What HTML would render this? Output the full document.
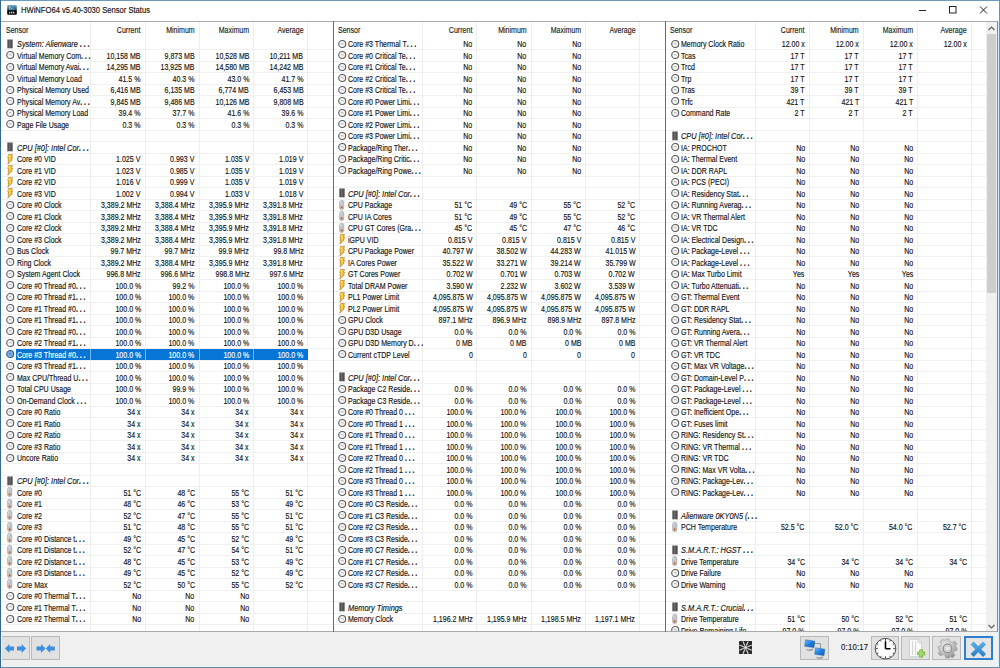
<!DOCTYPE html><html><head><meta charset="utf-8"><style>
*{margin:0;padding:0;box-sizing:border-box}
html,body{width:1000px;height:668px;overflow:hidden;background:#f0f0f0;font-family:"Liberation Sans",sans-serif}
.bd{position:absolute;background:#33698f}
#title{position:absolute;left:1px;top:1px;width:998px;height:20px;background:#fff}
#ttxt{position:absolute;left:21px;top:5px;font-size:8.3px;color:#111;white-space:nowrap;line-height:11px;transform:scaleX(0.917);transform-origin:0 50%;-webkit-text-stroke:0.15px #111}
.panel{position:absolute;top:21px;height:611px;background:#fff;overflow:hidden;border-top:1px solid #a9a9a9;border-bottom:1px solid #a9a9a9}
.vl{position:absolute;top:0;width:1px;height:611px;background:#eeeeee}
.hl{position:absolute;left:0;right:0;height:1px;background:#f0f0f0}
.hd{position:absolute;top:0.4px;height:16px;line-height:16px;font-size:8.8px;color:#1a1a1a;white-space:nowrap;transform:scaleX(0.80);-webkit-text-stroke:0.15px #1a1a1a;transform-origin:0 50%}
.hd.r{transform-origin:100% 50%}
.lb,.v{position:absolute;height:11.5px;line-height:11.5px;font-size:8.8px;color:#111;white-space:nowrap;transform:scaleX(0.80);-webkit-text-stroke:0.15px #111}
.lb{transform-origin:0 50%}.v{transform-origin:100% 50%}
.lb{left:14.2px}
.lb.g{font-style:italic;transform:scaleX(0.84)}
.el{letter-spacing:2.2px;font-weight:bold}
.s{color:#fff;-webkit-text-stroke:0.15px #fff}
.selbg{position:absolute;height:10.5px;background:#0675d6}
.selsep{position:absolute;width:1px;height:10.5px;background:#76b8f0}
.icw{position:absolute;left:3.6px;height:11.5px;width:11px}
.ic{position:absolute;left:0;top:0;overflow:visible}
.div{position:absolute;top:21px;width:1px;height:611px;background:#6a6a6a}
.sb{position:absolute;right:0;top:0;width:11px;height:610px;background:#f0f0f0}
.sbup{position:absolute;top:0;left:0;width:11px;height:12px}
.sbdn{position:absolute;bottom:0;left:0;width:11px;height:12px}
.sbup svg,.sbdn svg{position:absolute;left:0;top:0.5px}
.thumb{position:absolute;left:1px;top:11.5px;width:9px;height:259.5px;background:#cdcdcd}
.btn{position:absolute;top:636px;height:24px;width:29px;background:#e1e1e1;border:1px solid #b9b9b9}
</style></head><body>
<div id="title"></div>
<svg style="position:absolute;left:6.5px;top:5px" width="10" height="10" viewBox="0 0 10 10"><defs><linearGradient id="tg" x1="0" y1="0" x2="0" y2="1"><stop offset="0" stop-color="#78aacb"/><stop offset="0.5" stop-color="#154663"/><stop offset="0.6" stop-color="#000"/><stop offset="1" stop-color="#000"/></linearGradient></defs><rect x="0.2" y="0.1" width="9.6" height="9.7" rx="1" fill="url(#tg)"/><path d="M2.8 1.4v3.3M4.8 2.6v2.1M6.8 3.8v0.9" stroke="#bff0ff" stroke-width="0.9"/><ellipse cx="2.8" cy="7.6" rx="0.6" ry="1.1" fill="#fff"/><ellipse cx="4.8" cy="7.6" rx="0.6" ry="1.1" fill="#fff"/><ellipse cx="6.8" cy="7.6" rx="0.6" ry="1.1" fill="#fff"/></svg>
<div id="ttxt">HWiNFO64 v5.40-3030 Sensor Status</div>
<svg style="position:absolute;left:915px;top:4px" width="80" height="14" viewBox="0 0 80 14"><path d="M4 6.5h7" stroke="#222" stroke-width="1"/><rect x="34.5" y="2.5" width="6.5" height="6.5" fill="none" stroke="#222" stroke-width="1"/><path d="M65 2.5l7 7M72 2.5l-7 7" stroke="#222" stroke-width="1"/></svg>
<div class="panel" style="left:1px;width:332px">
<div class="vl" style="left:89.00px"></div>
<div class="vl" style="left:143.80px"></div>
<div class="vl" style="left:197.70px"></div>
<div class="vl" style="left:252.10px"></div>
<div class="vl" style="left:306.20px"></div>
<div class="hl" style="top:27.25px"></div>
<div class="hl" style="top:38.75px"></div>
<div class="hl" style="top:50.25px"></div>
<div class="hl" style="top:61.75px"></div>
<div class="hl" style="top:73.25px"></div>
<div class="hl" style="top:84.75px"></div>
<div class="hl" style="top:96.25px"></div>
<div class="hl" style="top:107.75px"></div>
<div class="hl" style="top:119.25px"></div>
<div class="hl" style="top:130.75px"></div>
<div class="hl" style="top:142.25px"></div>
<div class="hl" style="top:153.75px"></div>
<div class="hl" style="top:165.25px"></div>
<div class="hl" style="top:176.75px"></div>
<div class="hl" style="top:188.25px"></div>
<div class="hl" style="top:199.75px"></div>
<div class="hl" style="top:211.25px"></div>
<div class="hl" style="top:222.75px"></div>
<div class="hl" style="top:234.25px"></div>
<div class="hl" style="top:245.75px"></div>
<div class="hl" style="top:257.25px"></div>
<div class="hl" style="top:268.75px"></div>
<div class="hl" style="top:280.25px"></div>
<div class="hl" style="top:291.75px"></div>
<div class="hl" style="top:303.25px"></div>
<div class="hl" style="top:314.75px"></div>
<div class="hl" style="top:326.25px"></div>
<div class="hl" style="top:337.75px"></div>
<div class="hl" style="top:349.25px"></div>
<div class="hl" style="top:360.75px"></div>
<div class="hl" style="top:372.25px"></div>
<div class="hl" style="top:383.75px"></div>
<div class="hl" style="top:395.25px"></div>
<div class="hl" style="top:406.75px"></div>
<div class="hl" style="top:418.25px"></div>
<div class="hl" style="top:429.75px"></div>
<div class="hl" style="top:441.25px"></div>
<div class="hl" style="top:452.75px"></div>
<div class="hl" style="top:464.25px"></div>
<div class="hl" style="top:475.75px"></div>
<div class="hl" style="top:487.25px"></div>
<div class="hl" style="top:498.75px"></div>
<div class="hl" style="top:510.25px"></div>
<div class="hl" style="top:521.75px"></div>
<div class="hl" style="top:533.25px"></div>
<div class="hl" style="top:544.75px"></div>
<div class="hl" style="top:556.25px"></div>
<div class="hl" style="top:567.75px"></div>
<div class="hl" style="top:579.25px"></div>
<div class="hl" style="top:590.75px"></div>
<div class="hl" style="top:602.25px"></div>
<div class="hl" style="top:613.75px"></div>
<div class="hd" style="left:4.6px">Sensor</div>
<div class="hd r" style="right:192.20px">Current</div>
<div class="hd r" style="right:138.30px">Minimum</div>
<div class="hd r" style="right:83.90px">Maximum</div>
<div class="hd r" style="right:29.80px">Average</div>
<div class="icw" style="top:16.65px;left:5.4px"><svg class="ic" width="10" height="11" viewBox="0 0 10 11"><defs><linearGradient id="chg" x1="0" y1="0" x2="1" y2="0"><stop offset="0" stop-color="#3a3a3a"/><stop offset="0.45" stop-color="#6e6e6e"/><stop offset="1" stop-color="#383838"/></linearGradient></defs><rect x="1.4" y="0.5" width="5.2" height="8.8" fill="url(#chg)"/><path d="M0.9 1.8h0.6M0.9 3.8h0.6M0.9 5.8h0.6M0.9 7.8h0.6M6.5 1.8h0.6M6.5 3.8h0.6M6.5 5.8h0.6M6.5 7.8h0.6" stroke="#999" stroke-width="0.7"/></svg></div>
<div class="lb g" style="top:17.05px;left:16.0px">System: Alienware <span class=el>...</span></div>
<div class="icw" style="top:28.15px;left:5.4px"><svg class="ic" width="10" height="11" viewBox="0 0 10 11"><circle cx="4.2" cy="5.0" r="3.5" fill="#f4f4f4" stroke="#5a5a5a" stroke-width="1.1"/><path d="M2.9 4.7 Q4.3 4.2 5.7 5.3" fill="none" stroke="#9a9a9a" stroke-width="0.8"/></svg></div>
<div class="lb" style="top:28.55px;left:16.0px">Virtual Memory Com<span class=el>...</span></div>
<div class="v" style="top:28.55px;right:192.20px">10,158 MB</div>
<div class="v" style="top:28.55px;right:138.30px">9,873 MB</div>
<div class="v" style="top:28.55px;right:83.90px">10,528 MB</div>
<div class="v" style="top:28.55px;right:29.80px">10,211 MB</div>
<div class="icw" style="top:39.65px;left:5.4px"><svg class="ic" width="10" height="11" viewBox="0 0 10 11"><circle cx="4.2" cy="5.0" r="3.5" fill="#f4f4f4" stroke="#5a5a5a" stroke-width="1.1"/><path d="M2.9 4.7 Q4.3 4.2 5.7 5.3" fill="none" stroke="#9a9a9a" stroke-width="0.8"/></svg></div>
<div class="lb" style="top:40.05px;left:16.0px">Virtual Memory Avai<span class=el>...</span></div>
<div class="v" style="top:40.05px;right:192.20px">14,295 MB</div>
<div class="v" style="top:40.05px;right:138.30px">13,925 MB</div>
<div class="v" style="top:40.05px;right:83.90px">14,580 MB</div>
<div class="v" style="top:40.05px;right:29.80px">14,242 MB</div>
<div class="icw" style="top:51.15px;left:5.4px"><svg class="ic" width="10" height="11" viewBox="0 0 10 11"><circle cx="4.2" cy="5.0" r="3.5" fill="#f4f4f4" stroke="#5a5a5a" stroke-width="1.1"/><path d="M2.9 4.7 Q4.3 4.2 5.7 5.3" fill="none" stroke="#9a9a9a" stroke-width="0.8"/></svg></div>
<div class="lb" style="top:51.55px;left:16.0px">Virtual Memory Load</div>
<div class="v" style="top:51.55px;right:192.20px">41.5 %</div>
<div class="v" style="top:51.55px;right:138.30px">40.3 %</div>
<div class="v" style="top:51.55px;right:83.90px">43.0 %</div>
<div class="v" style="top:51.55px;right:29.80px">41.7 %</div>
<div class="icw" style="top:62.65px;left:5.4px"><svg class="ic" width="10" height="11" viewBox="0 0 10 11"><circle cx="4.2" cy="5.0" r="3.5" fill="#f4f4f4" stroke="#5a5a5a" stroke-width="1.1"/><path d="M2.9 4.7 Q4.3 4.2 5.7 5.3" fill="none" stroke="#9a9a9a" stroke-width="0.8"/></svg></div>
<div class="lb" style="top:63.05px;left:16.0px">Physical Memory Used</div>
<div class="v" style="top:63.05px;right:192.20px">6,416 MB</div>
<div class="v" style="top:63.05px;right:138.30px">6,135 MB</div>
<div class="v" style="top:63.05px;right:83.90px">6,774 MB</div>
<div class="v" style="top:63.05px;right:29.80px">6,453 MB</div>
<div class="icw" style="top:74.15px;left:5.4px"><svg class="ic" width="10" height="11" viewBox="0 0 10 11"><circle cx="4.2" cy="5.0" r="3.5" fill="#f4f4f4" stroke="#5a5a5a" stroke-width="1.1"/><path d="M2.9 4.7 Q4.3 4.2 5.7 5.3" fill="none" stroke="#9a9a9a" stroke-width="0.8"/></svg></div>
<div class="lb" style="top:74.55px;left:16.0px">Physical Memory Av<span class=el>...</span></div>
<div class="v" style="top:74.55px;right:192.20px">9,845 MB</div>
<div class="v" style="top:74.55px;right:138.30px">9,486 MB</div>
<div class="v" style="top:74.55px;right:83.90px">10,126 MB</div>
<div class="v" style="top:74.55px;right:29.80px">9,808 MB</div>
<div class="icw" style="top:85.65px;left:5.4px"><svg class="ic" width="10" height="11" viewBox="0 0 10 11"><circle cx="4.2" cy="5.0" r="3.5" fill="#f4f4f4" stroke="#5a5a5a" stroke-width="1.1"/><path d="M2.9 4.7 Q4.3 4.2 5.7 5.3" fill="none" stroke="#9a9a9a" stroke-width="0.8"/></svg></div>
<div class="lb" style="top:86.05px;left:16.0px">Physical Memory Load</div>
<div class="v" style="top:86.05px;right:192.20px">39.4 %</div>
<div class="v" style="top:86.05px;right:138.30px">37.7 %</div>
<div class="v" style="top:86.05px;right:83.90px">41.6 %</div>
<div class="v" style="top:86.05px;right:29.80px">39.6 %</div>
<div class="icw" style="top:97.15px;left:5.4px"><svg class="ic" width="10" height="11" viewBox="0 0 10 11"><circle cx="4.2" cy="5.0" r="3.5" fill="#f4f4f4" stroke="#5a5a5a" stroke-width="1.1"/><path d="M2.9 4.7 Q4.3 4.2 5.7 5.3" fill="none" stroke="#9a9a9a" stroke-width="0.8"/></svg></div>
<div class="lb" style="top:97.55px;left:16.0px">Page File Usage</div>
<div class="v" style="top:97.55px;right:192.20px">0.3 %</div>
<div class="v" style="top:97.55px;right:138.30px">0.3 %</div>
<div class="v" style="top:97.55px;right:83.90px">0.3 %</div>
<div class="v" style="top:97.55px;right:29.80px">0.3 %</div>
<div class="icw" style="top:120.15px;left:5.4px"><svg class="ic" width="10" height="11" viewBox="0 0 10 11"><defs><linearGradient id="chg" x1="0" y1="0" x2="1" y2="0"><stop offset="0" stop-color="#3a3a3a"/><stop offset="0.45" stop-color="#6e6e6e"/><stop offset="1" stop-color="#383838"/></linearGradient></defs><rect x="1.4" y="0.5" width="5.2" height="8.8" fill="url(#chg)"/><path d="M0.9 1.8h0.6M0.9 3.8h0.6M0.9 5.8h0.6M0.9 7.8h0.6M6.5 1.8h0.6M6.5 3.8h0.6M6.5 5.8h0.6M6.5 7.8h0.6" stroke="#999" stroke-width="0.7"/></svg></div>
<div class="lb g" style="top:120.55px;left:16.0px">CPU [#0]: Intel Cor<span class=el>...</span></div>
<div class="icw" style="top:131.65px;left:5.4px"><svg class="ic" width="10" height="11" viewBox="0 0 10 11"><path d="M2.4 0.6 L6.5 0.6 L5.3 3.3 L6.7 3.3 L5.4 5.9 L6.3 5.9 L1.8 10.1 L2.9 6.4 L1.9 6.4 L2.8 3.9 L1.8 3.9 Z" fill="#f3d13a" stroke="#b46a1c" stroke-width="0.6" stroke-linejoin="round"/><path d="M3.3 1.2 L2.6 3.4" stroke="#fff6b0" stroke-width="0.6"/></svg></div>
<div class="lb" style="top:132.05px;left:16.0px">Core #0 VID</div>
<div class="v" style="top:132.05px;right:192.20px">1.025 V</div>
<div class="v" style="top:132.05px;right:138.30px">0.993 V</div>
<div class="v" style="top:132.05px;right:83.90px">1.035 V</div>
<div class="v" style="top:132.05px;right:29.80px">1.019 V</div>
<div class="icw" style="top:143.15px;left:5.4px"><svg class="ic" width="10" height="11" viewBox="0 0 10 11"><path d="M2.4 0.6 L6.5 0.6 L5.3 3.3 L6.7 3.3 L5.4 5.9 L6.3 5.9 L1.8 10.1 L2.9 6.4 L1.9 6.4 L2.8 3.9 L1.8 3.9 Z" fill="#f3d13a" stroke="#b46a1c" stroke-width="0.6" stroke-linejoin="round"/><path d="M3.3 1.2 L2.6 3.4" stroke="#fff6b0" stroke-width="0.6"/></svg></div>
<div class="lb" style="top:143.55px;left:16.0px">Core #1 VID</div>
<div class="v" style="top:143.55px;right:192.20px">1.023 V</div>
<div class="v" style="top:143.55px;right:138.30px">0.985 V</div>
<div class="v" style="top:143.55px;right:83.90px">1.035 V</div>
<div class="v" style="top:143.55px;right:29.80px">1.019 V</div>
<div class="icw" style="top:154.65px;left:5.4px"><svg class="ic" width="10" height="11" viewBox="0 0 10 11"><path d="M2.4 0.6 L6.5 0.6 L5.3 3.3 L6.7 3.3 L5.4 5.9 L6.3 5.9 L1.8 10.1 L2.9 6.4 L1.9 6.4 L2.8 3.9 L1.8 3.9 Z" fill="#f3d13a" stroke="#b46a1c" stroke-width="0.6" stroke-linejoin="round"/><path d="M3.3 1.2 L2.6 3.4" stroke="#fff6b0" stroke-width="0.6"/></svg></div>
<div class="lb" style="top:155.05px;left:16.0px">Core #2 VID</div>
<div class="v" style="top:155.05px;right:192.20px">1.016 V</div>
<div class="v" style="top:155.05px;right:138.30px">0.999 V</div>
<div class="v" style="top:155.05px;right:83.90px">1.035 V</div>
<div class="v" style="top:155.05px;right:29.80px">1.019 V</div>
<div class="icw" style="top:166.15px;left:5.4px"><svg class="ic" width="10" height="11" viewBox="0 0 10 11"><path d="M2.4 0.6 L6.5 0.6 L5.3 3.3 L6.7 3.3 L5.4 5.9 L6.3 5.9 L1.8 10.1 L2.9 6.4 L1.9 6.4 L2.8 3.9 L1.8 3.9 Z" fill="#f3d13a" stroke="#b46a1c" stroke-width="0.6" stroke-linejoin="round"/><path d="M3.3 1.2 L2.6 3.4" stroke="#fff6b0" stroke-width="0.6"/></svg></div>
<div class="lb" style="top:166.55px;left:16.0px">Core #3 VID</div>
<div class="v" style="top:166.55px;right:192.20px">1.002 V</div>
<div class="v" style="top:166.55px;right:138.30px">0.994 V</div>
<div class="v" style="top:166.55px;right:83.90px">1.033 V</div>
<div class="v" style="top:166.55px;right:29.80px">1.018 V</div>
<div class="icw" style="top:177.65px;left:5.4px"><svg class="ic" width="10" height="11" viewBox="0 0 10 11"><circle cx="4.2" cy="5.0" r="3.5" fill="#f4f4f4" stroke="#5a5a5a" stroke-width="1.1"/><path d="M2.9 4.7 Q4.3 4.2 5.7 5.3" fill="none" stroke="#9a9a9a" stroke-width="0.8"/></svg></div>
<div class="lb" style="top:178.05px;left:16.0px">Core #0 Clock</div>
<div class="v" style="top:178.05px;right:192.20px">3,389.2 MHz</div>
<div class="v" style="top:178.05px;right:138.30px">3,388.4 MHz</div>
<div class="v" style="top:178.05px;right:83.90px">3,395.9 MHz</div>
<div class="v" style="top:178.05px;right:29.80px">3,391.8 MHz</div>
<div class="icw" style="top:189.15px;left:5.4px"><svg class="ic" width="10" height="11" viewBox="0 0 10 11"><circle cx="4.2" cy="5.0" r="3.5" fill="#f4f4f4" stroke="#5a5a5a" stroke-width="1.1"/><path d="M2.9 4.7 Q4.3 4.2 5.7 5.3" fill="none" stroke="#9a9a9a" stroke-width="0.8"/></svg></div>
<div class="lb" style="top:189.55px;left:16.0px">Core #1 Clock</div>
<div class="v" style="top:189.55px;right:192.20px">3,389.2 MHz</div>
<div class="v" style="top:189.55px;right:138.30px">3,388.4 MHz</div>
<div class="v" style="top:189.55px;right:83.90px">3,395.9 MHz</div>
<div class="v" style="top:189.55px;right:29.80px">3,391.8 MHz</div>
<div class="icw" style="top:200.65px;left:5.4px"><svg class="ic" width="10" height="11" viewBox="0 0 10 11"><circle cx="4.2" cy="5.0" r="3.5" fill="#f4f4f4" stroke="#5a5a5a" stroke-width="1.1"/><path d="M2.9 4.7 Q4.3 4.2 5.7 5.3" fill="none" stroke="#9a9a9a" stroke-width="0.8"/></svg></div>
<div class="lb" style="top:201.05px;left:16.0px">Core #2 Clock</div>
<div class="v" style="top:201.05px;right:192.20px">3,389.2 MHz</div>
<div class="v" style="top:201.05px;right:138.30px">3,388.4 MHz</div>
<div class="v" style="top:201.05px;right:83.90px">3,395.9 MHz</div>
<div class="v" style="top:201.05px;right:29.80px">3,391.8 MHz</div>
<div class="icw" style="top:212.15px;left:5.4px"><svg class="ic" width="10" height="11" viewBox="0 0 10 11"><circle cx="4.2" cy="5.0" r="3.5" fill="#f4f4f4" stroke="#5a5a5a" stroke-width="1.1"/><path d="M2.9 4.7 Q4.3 4.2 5.7 5.3" fill="none" stroke="#9a9a9a" stroke-width="0.8"/></svg></div>
<div class="lb" style="top:212.55px;left:16.0px">Core #3 Clock</div>
<div class="v" style="top:212.55px;right:192.20px">3,389.2 MHz</div>
<div class="v" style="top:212.55px;right:138.30px">3,388.4 MHz</div>
<div class="v" style="top:212.55px;right:83.90px">3,395.9 MHz</div>
<div class="v" style="top:212.55px;right:29.80px">3,391.8 MHz</div>
<div class="icw" style="top:223.65px;left:5.4px"><svg class="ic" width="10" height="11" viewBox="0 0 10 11"><circle cx="4.2" cy="5.0" r="3.5" fill="#f4f4f4" stroke="#5a5a5a" stroke-width="1.1"/><path d="M2.9 4.7 Q4.3 4.2 5.7 5.3" fill="none" stroke="#9a9a9a" stroke-width="0.8"/></svg></div>
<div class="lb" style="top:224.05px;left:16.0px">Bus Clock</div>
<div class="v" style="top:224.05px;right:192.20px">99.7 MHz</div>
<div class="v" style="top:224.05px;right:138.30px">99.7 MHz</div>
<div class="v" style="top:224.05px;right:83.90px">99.9 MHz</div>
<div class="v" style="top:224.05px;right:29.80px">99.8 MHz</div>
<div class="icw" style="top:235.15px;left:5.4px"><svg class="ic" width="10" height="11" viewBox="0 0 10 11"><circle cx="4.2" cy="5.0" r="3.5" fill="#f4f4f4" stroke="#5a5a5a" stroke-width="1.1"/><path d="M2.9 4.7 Q4.3 4.2 5.7 5.3" fill="none" stroke="#9a9a9a" stroke-width="0.8"/></svg></div>
<div class="lb" style="top:235.55px;left:16.0px">Ring Clock</div>
<div class="v" style="top:235.55px;right:192.20px">3,389.2 MHz</div>
<div class="v" style="top:235.55px;right:138.30px">3,388.4 MHz</div>
<div class="v" style="top:235.55px;right:83.90px">3,395.9 MHz</div>
<div class="v" style="top:235.55px;right:29.80px">3,391.8 MHz</div>
<div class="icw" style="top:246.65px;left:5.4px"><svg class="ic" width="10" height="11" viewBox="0 0 10 11"><circle cx="4.2" cy="5.0" r="3.5" fill="#f4f4f4" stroke="#5a5a5a" stroke-width="1.1"/><path d="M2.9 4.7 Q4.3 4.2 5.7 5.3" fill="none" stroke="#9a9a9a" stroke-width="0.8"/></svg></div>
<div class="lb" style="top:247.05px;left:16.0px">System Agent Clock</div>
<div class="v" style="top:247.05px;right:192.20px">996.8 MHz</div>
<div class="v" style="top:247.05px;right:138.30px">996.6 MHz</div>
<div class="v" style="top:247.05px;right:83.90px">998.8 MHz</div>
<div class="v" style="top:247.05px;right:29.80px">997.6 MHz</div>
<div class="icw" style="top:258.15px;left:5.4px"><svg class="ic" width="10" height="11" viewBox="0 0 10 11"><circle cx="4.2" cy="5.0" r="3.5" fill="#f4f4f4" stroke="#5a5a5a" stroke-width="1.1"/><path d="M2.9 4.7 Q4.3 4.2 5.7 5.3" fill="none" stroke="#9a9a9a" stroke-width="0.8"/></svg></div>
<div class="lb" style="top:258.55px;left:16.0px">Core #0 Thread #0<span class=el>...</span></div>
<div class="v" style="top:258.55px;right:192.20px">100.0 %</div>
<div class="v" style="top:258.55px;right:138.30px">99.2 %</div>
<div class="v" style="top:258.55px;right:83.90px">100.0 %</div>
<div class="v" style="top:258.55px;right:29.80px">100.0 %</div>
<div class="icw" style="top:269.65px;left:5.4px"><svg class="ic" width="10" height="11" viewBox="0 0 10 11"><circle cx="4.2" cy="5.0" r="3.5" fill="#f4f4f4" stroke="#5a5a5a" stroke-width="1.1"/><path d="M2.9 4.7 Q4.3 4.2 5.7 5.3" fill="none" stroke="#9a9a9a" stroke-width="0.8"/></svg></div>
<div class="lb" style="top:270.05px;left:16.0px">Core #0 Thread #1<span class=el>...</span></div>
<div class="v" style="top:270.05px;right:192.20px">100.0 %</div>
<div class="v" style="top:270.05px;right:138.30px">100.0 %</div>
<div class="v" style="top:270.05px;right:83.90px">100.0 %</div>
<div class="v" style="top:270.05px;right:29.80px">100.0 %</div>
<div class="icw" style="top:281.15px;left:5.4px"><svg class="ic" width="10" height="11" viewBox="0 0 10 11"><circle cx="4.2" cy="5.0" r="3.5" fill="#f4f4f4" stroke="#5a5a5a" stroke-width="1.1"/><path d="M2.9 4.7 Q4.3 4.2 5.7 5.3" fill="none" stroke="#9a9a9a" stroke-width="0.8"/></svg></div>
<div class="lb" style="top:281.55px;left:16.0px">Core #1 Thread #0<span class=el>...</span></div>
<div class="v" style="top:281.55px;right:192.20px">100.0 %</div>
<div class="v" style="top:281.55px;right:138.30px">100.0 %</div>
<div class="v" style="top:281.55px;right:83.90px">100.0 %</div>
<div class="v" style="top:281.55px;right:29.80px">100.0 %</div>
<div class="icw" style="top:292.65px;left:5.4px"><svg class="ic" width="10" height="11" viewBox="0 0 10 11"><circle cx="4.2" cy="5.0" r="3.5" fill="#f4f4f4" stroke="#5a5a5a" stroke-width="1.1"/><path d="M2.9 4.7 Q4.3 4.2 5.7 5.3" fill="none" stroke="#9a9a9a" stroke-width="0.8"/></svg></div>
<div class="lb" style="top:293.05px;left:16.0px">Core #1 Thread #1<span class=el>...</span></div>
<div class="v" style="top:293.05px;right:192.20px">100.0 %</div>
<div class="v" style="top:293.05px;right:138.30px">100.0 %</div>
<div class="v" style="top:293.05px;right:83.90px">100.0 %</div>
<div class="v" style="top:293.05px;right:29.80px">100.0 %</div>
<div class="icw" style="top:304.15px;left:5.4px"><svg class="ic" width="10" height="11" viewBox="0 0 10 11"><circle cx="4.2" cy="5.0" r="3.5" fill="#f4f4f4" stroke="#5a5a5a" stroke-width="1.1"/><path d="M2.9 4.7 Q4.3 4.2 5.7 5.3" fill="none" stroke="#9a9a9a" stroke-width="0.8"/></svg></div>
<div class="lb" style="top:304.55px;left:16.0px">Core #2 Thread #0<span class=el>...</span></div>
<div class="v" style="top:304.55px;right:192.20px">100.0 %</div>
<div class="v" style="top:304.55px;right:138.30px">100.0 %</div>
<div class="v" style="top:304.55px;right:83.90px">100.0 %</div>
<div class="v" style="top:304.55px;right:29.80px">100.0 %</div>
<div class="icw" style="top:315.65px;left:5.4px"><svg class="ic" width="10" height="11" viewBox="0 0 10 11"><circle cx="4.2" cy="5.0" r="3.5" fill="#f4f4f4" stroke="#5a5a5a" stroke-width="1.1"/><path d="M2.9 4.7 Q4.3 4.2 5.7 5.3" fill="none" stroke="#9a9a9a" stroke-width="0.8"/></svg></div>
<div class="lb" style="top:316.05px;left:16.0px">Core #2 Thread #1<span class=el>...</span></div>
<div class="v" style="top:316.05px;right:192.20px">100.0 %</div>
<div class="v" style="top:316.05px;right:138.30px">100.0 %</div>
<div class="v" style="top:316.05px;right:83.90px">100.0 %</div>
<div class="v" style="top:316.05px;right:29.80px">100.0 %</div>
<div class="selbg" style="top:327.00px;left:15.0px;width:292.20px"></div>
<div class="selsep" style="top:327.00px;left:89.00px"></div>
<div class="selsep" style="top:327.00px;left:143.80px"></div>
<div class="selsep" style="top:327.00px;left:197.70px"></div>
<div class="selsep" style="top:327.00px;left:252.10px"></div>
<div class="icw" style="top:327.15px;left:5.4px"><svg class="ic" width="10" height="11" viewBox="0 0 10 11"><circle cx="4.2" cy="5.0" r="3.5" fill="#7fb0e0" stroke="#2d5f99" stroke-width="1.1"/><path d="M2.9 4.7 Q4.3 4.2 5.7 5.3" fill="none" stroke="#3a6aa8" stroke-width="0.8"/></svg></div>
<div class="lb s" style="top:327.55px;left:16.0px">Core #3 Thread #0<span class=el>...</span></div>
<div class="v s" style="top:327.55px;right:192.20px">100.0 %</div>
<div class="v s" style="top:327.55px;right:138.30px">100.0 %</div>
<div class="v s" style="top:327.55px;right:83.90px">100.0 %</div>
<div class="v s" style="top:327.55px;right:29.80px">100.0 %</div>
<div class="icw" style="top:338.65px;left:5.4px"><svg class="ic" width="10" height="11" viewBox="0 0 10 11"><circle cx="4.2" cy="5.0" r="3.5" fill="#f4f4f4" stroke="#5a5a5a" stroke-width="1.1"/><path d="M2.9 4.7 Q4.3 4.2 5.7 5.3" fill="none" stroke="#9a9a9a" stroke-width="0.8"/></svg></div>
<div class="lb" style="top:339.05px;left:16.0px">Core #3 Thread #1<span class=el>...</span></div>
<div class="v" style="top:339.05px;right:192.20px">100.0 %</div>
<div class="v" style="top:339.05px;right:138.30px">100.0 %</div>
<div class="v" style="top:339.05px;right:83.90px">100.0 %</div>
<div class="v" style="top:339.05px;right:29.80px">100.0 %</div>
<div class="icw" style="top:350.15px;left:5.4px"><svg class="ic" width="10" height="11" viewBox="0 0 10 11"><circle cx="4.2" cy="5.0" r="3.5" fill="#f4f4f4" stroke="#5a5a5a" stroke-width="1.1"/><path d="M2.9 4.7 Q4.3 4.2 5.7 5.3" fill="none" stroke="#9a9a9a" stroke-width="0.8"/></svg></div>
<div class="lb" style="top:350.55px;left:16.0px">Max CPU/Thread U<span class=el>...</span></div>
<div class="v" style="top:350.55px;right:192.20px">100.0 %</div>
<div class="v" style="top:350.55px;right:138.30px">100.0 %</div>
<div class="v" style="top:350.55px;right:83.90px">100.0 %</div>
<div class="v" style="top:350.55px;right:29.80px">100.0 %</div>
<div class="icw" style="top:361.65px;left:5.4px"><svg class="ic" width="10" height="11" viewBox="0 0 10 11"><circle cx="4.2" cy="5.0" r="3.5" fill="#f4f4f4" stroke="#5a5a5a" stroke-width="1.1"/><path d="M2.9 4.7 Q4.3 4.2 5.7 5.3" fill="none" stroke="#9a9a9a" stroke-width="0.8"/></svg></div>
<div class="lb" style="top:362.05px;left:16.0px">Total CPU Usage</div>
<div class="v" style="top:362.05px;right:192.20px">100.0 %</div>
<div class="v" style="top:362.05px;right:138.30px">99.9 %</div>
<div class="v" style="top:362.05px;right:83.90px">100.0 %</div>
<div class="v" style="top:362.05px;right:29.80px">100.0 %</div>
<div class="icw" style="top:373.15px;left:5.4px"><svg class="ic" width="10" height="11" viewBox="0 0 10 11"><circle cx="4.2" cy="5.0" r="3.5" fill="#f4f4f4" stroke="#5a5a5a" stroke-width="1.1"/><path d="M2.9 4.7 Q4.3 4.2 5.7 5.3" fill="none" stroke="#9a9a9a" stroke-width="0.8"/></svg></div>
<div class="lb" style="top:373.55px;left:16.0px">On-Demand Clock <span class=el>...</span></div>
<div class="v" style="top:373.55px;right:192.20px">100.0 %</div>
<div class="v" style="top:373.55px;right:138.30px">100.0 %</div>
<div class="v" style="top:373.55px;right:83.90px">100.0 %</div>
<div class="v" style="top:373.55px;right:29.80px">100.0 %</div>
<div class="icw" style="top:384.65px;left:5.4px"><svg class="ic" width="10" height="11" viewBox="0 0 10 11"><circle cx="4.2" cy="5.0" r="3.5" fill="#f4f4f4" stroke="#5a5a5a" stroke-width="1.1"/><path d="M2.9 4.7 Q4.3 4.2 5.7 5.3" fill="none" stroke="#9a9a9a" stroke-width="0.8"/></svg></div>
<div class="lb" style="top:385.05px;left:16.0px">Core #0 Ratio</div>
<div class="v" style="top:385.05px;right:192.20px">34 x</div>
<div class="v" style="top:385.05px;right:138.30px">34 x</div>
<div class="v" style="top:385.05px;right:83.90px">34 x</div>
<div class="v" style="top:385.05px;right:29.80px">34 x</div>
<div class="icw" style="top:396.15px;left:5.4px"><svg class="ic" width="10" height="11" viewBox="0 0 10 11"><circle cx="4.2" cy="5.0" r="3.5" fill="#f4f4f4" stroke="#5a5a5a" stroke-width="1.1"/><path d="M2.9 4.7 Q4.3 4.2 5.7 5.3" fill="none" stroke="#9a9a9a" stroke-width="0.8"/></svg></div>
<div class="lb" style="top:396.55px;left:16.0px">Core #1 Ratio</div>
<div class="v" style="top:396.55px;right:192.20px">34 x</div>
<div class="v" style="top:396.55px;right:138.30px">34 x</div>
<div class="v" style="top:396.55px;right:83.90px">34 x</div>
<div class="v" style="top:396.55px;right:29.80px">34 x</div>
<div class="icw" style="top:407.65px;left:5.4px"><svg class="ic" width="10" height="11" viewBox="0 0 10 11"><circle cx="4.2" cy="5.0" r="3.5" fill="#f4f4f4" stroke="#5a5a5a" stroke-width="1.1"/><path d="M2.9 4.7 Q4.3 4.2 5.7 5.3" fill="none" stroke="#9a9a9a" stroke-width="0.8"/></svg></div>
<div class="lb" style="top:408.05px;left:16.0px">Core #2 Ratio</div>
<div class="v" style="top:408.05px;right:192.20px">34 x</div>
<div class="v" style="top:408.05px;right:138.30px">34 x</div>
<div class="v" style="top:408.05px;right:83.90px">34 x</div>
<div class="v" style="top:408.05px;right:29.80px">34 x</div>
<div class="icw" style="top:419.15px;left:5.4px"><svg class="ic" width="10" height="11" viewBox="0 0 10 11"><circle cx="4.2" cy="5.0" r="3.5" fill="#f4f4f4" stroke="#5a5a5a" stroke-width="1.1"/><path d="M2.9 4.7 Q4.3 4.2 5.7 5.3" fill="none" stroke="#9a9a9a" stroke-width="0.8"/></svg></div>
<div class="lb" style="top:419.55px;left:16.0px">Core #3 Ratio</div>
<div class="v" style="top:419.55px;right:192.20px">34 x</div>
<div class="v" style="top:419.55px;right:138.30px">34 x</div>
<div class="v" style="top:419.55px;right:83.90px">34 x</div>
<div class="v" style="top:419.55px;right:29.80px">34 x</div>
<div class="icw" style="top:430.65px;left:5.4px"><svg class="ic" width="10" height="11" viewBox="0 0 10 11"><circle cx="4.2" cy="5.0" r="3.5" fill="#f4f4f4" stroke="#5a5a5a" stroke-width="1.1"/><path d="M2.9 4.7 Q4.3 4.2 5.7 5.3" fill="none" stroke="#9a9a9a" stroke-width="0.8"/></svg></div>
<div class="lb" style="top:431.05px;left:16.0px">Uncore Ratio</div>
<div class="v" style="top:431.05px;right:192.20px">34 x</div>
<div class="v" style="top:431.05px;right:138.30px">34 x</div>
<div class="v" style="top:431.05px;right:83.90px">34 x</div>
<div class="v" style="top:431.05px;right:29.80px">34 x</div>
<div class="icw" style="top:453.65px;left:5.4px"><svg class="ic" width="10" height="11" viewBox="0 0 10 11"><defs><linearGradient id="chg" x1="0" y1="0" x2="1" y2="0"><stop offset="0" stop-color="#3a3a3a"/><stop offset="0.45" stop-color="#6e6e6e"/><stop offset="1" stop-color="#383838"/></linearGradient></defs><rect x="1.4" y="0.5" width="5.2" height="8.8" fill="url(#chg)"/><path d="M0.9 1.8h0.6M0.9 3.8h0.6M0.9 5.8h0.6M0.9 7.8h0.6M6.5 1.8h0.6M6.5 3.8h0.6M6.5 5.8h0.6M6.5 7.8h0.6" stroke="#999" stroke-width="0.7"/></svg></div>
<div class="lb g" style="top:454.05px;left:16.0px">CPU [#0]: Intel Cor<span class=el>...</span></div>
<div class="icw" style="top:465.15px;left:5.4px"><svg class="ic" width="10" height="11" viewBox="0 0 10 11"><defs><linearGradient id="thg" x1="0" y1="0" x2="0" y2="1"><stop offset="0" stop-color="#b9c3ca"/><stop offset="0.55" stop-color="#c3c3c3"/><stop offset="0.7" stop-color="#d8b4a0"/><stop offset="1" stop-color="#c9a692"/></linearGradient></defs><rect x="1.5" y="0.2" width="4.4" height="9.4" rx="2.2" fill="url(#thg)" stroke="#9aa0a4" stroke-width="0.5"/><path d="M2.9 1.2v2.5" stroke="#e8f6ff" stroke-width="0.7"/><circle cx="3.7" cy="7.3" r="0.75" fill="#a03a2a"/></svg></div>
<div class="lb" style="top:465.55px;left:16.0px">Core #0</div>
<div class="v" style="top:465.55px;right:192.20px">51 °C</div>
<div class="v" style="top:465.55px;right:138.30px">48 °C</div>
<div class="v" style="top:465.55px;right:83.90px">55 °C</div>
<div class="v" style="top:465.55px;right:29.80px">51 °C</div>
<div class="icw" style="top:476.65px;left:5.4px"><svg class="ic" width="10" height="11" viewBox="0 0 10 11"><defs><linearGradient id="thg" x1="0" y1="0" x2="0" y2="1"><stop offset="0" stop-color="#b9c3ca"/><stop offset="0.55" stop-color="#c3c3c3"/><stop offset="0.7" stop-color="#d8b4a0"/><stop offset="1" stop-color="#c9a692"/></linearGradient></defs><rect x="1.5" y="0.2" width="4.4" height="9.4" rx="2.2" fill="url(#thg)" stroke="#9aa0a4" stroke-width="0.5"/><path d="M2.9 1.2v2.5" stroke="#e8f6ff" stroke-width="0.7"/><circle cx="3.7" cy="7.3" r="0.75" fill="#a03a2a"/></svg></div>
<div class="lb" style="top:477.05px;left:16.0px">Core #1</div>
<div class="v" style="top:477.05px;right:192.20px">48 °C</div>
<div class="v" style="top:477.05px;right:138.30px">46 °C</div>
<div class="v" style="top:477.05px;right:83.90px">53 °C</div>
<div class="v" style="top:477.05px;right:29.80px">49 °C</div>
<div class="icw" style="top:488.15px;left:5.4px"><svg class="ic" width="10" height="11" viewBox="0 0 10 11"><defs><linearGradient id="thg" x1="0" y1="0" x2="0" y2="1"><stop offset="0" stop-color="#b9c3ca"/><stop offset="0.55" stop-color="#c3c3c3"/><stop offset="0.7" stop-color="#d8b4a0"/><stop offset="1" stop-color="#c9a692"/></linearGradient></defs><rect x="1.5" y="0.2" width="4.4" height="9.4" rx="2.2" fill="url(#thg)" stroke="#9aa0a4" stroke-width="0.5"/><path d="M2.9 1.2v2.5" stroke="#e8f6ff" stroke-width="0.7"/><circle cx="3.7" cy="7.3" r="0.75" fill="#a03a2a"/></svg></div>
<div class="lb" style="top:488.55px;left:16.0px">Core #2</div>
<div class="v" style="top:488.55px;right:192.20px">52 °C</div>
<div class="v" style="top:488.55px;right:138.30px">47 °C</div>
<div class="v" style="top:488.55px;right:83.90px">55 °C</div>
<div class="v" style="top:488.55px;right:29.80px">51 °C</div>
<div class="icw" style="top:499.65px;left:5.4px"><svg class="ic" width="10" height="11" viewBox="0 0 10 11"><defs><linearGradient id="thg" x1="0" y1="0" x2="0" y2="1"><stop offset="0" stop-color="#b9c3ca"/><stop offset="0.55" stop-color="#c3c3c3"/><stop offset="0.7" stop-color="#d8b4a0"/><stop offset="1" stop-color="#c9a692"/></linearGradient></defs><rect x="1.5" y="0.2" width="4.4" height="9.4" rx="2.2" fill="url(#thg)" stroke="#9aa0a4" stroke-width="0.5"/><path d="M2.9 1.2v2.5" stroke="#e8f6ff" stroke-width="0.7"/><circle cx="3.7" cy="7.3" r="0.75" fill="#a03a2a"/></svg></div>
<div class="lb" style="top:500.05px;left:16.0px">Core #3</div>
<div class="v" style="top:500.05px;right:192.20px">51 °C</div>
<div class="v" style="top:500.05px;right:138.30px">48 °C</div>
<div class="v" style="top:500.05px;right:83.90px">55 °C</div>
<div class="v" style="top:500.05px;right:29.80px">51 °C</div>
<div class="icw" style="top:511.15px;left:5.4px"><svg class="ic" width="10" height="11" viewBox="0 0 10 11"><defs><linearGradient id="thg" x1="0" y1="0" x2="0" y2="1"><stop offset="0" stop-color="#b9c3ca"/><stop offset="0.55" stop-color="#c3c3c3"/><stop offset="0.7" stop-color="#d8b4a0"/><stop offset="1" stop-color="#c9a692"/></linearGradient></defs><rect x="1.5" y="0.2" width="4.4" height="9.4" rx="2.2" fill="url(#thg)" stroke="#9aa0a4" stroke-width="0.5"/><path d="M2.9 1.2v2.5" stroke="#e8f6ff" stroke-width="0.7"/><circle cx="3.7" cy="7.3" r="0.75" fill="#a03a2a"/></svg></div>
<div class="lb" style="top:511.55px;left:16.0px">Core #0 Distance t<span class=el>...</span></div>
<div class="v" style="top:511.55px;right:192.20px">49 °C</div>
<div class="v" style="top:511.55px;right:138.30px">45 °C</div>
<div class="v" style="top:511.55px;right:83.90px">52 °C</div>
<div class="v" style="top:511.55px;right:29.80px">49 °C</div>
<div class="icw" style="top:522.65px;left:5.4px"><svg class="ic" width="10" height="11" viewBox="0 0 10 11"><defs><linearGradient id="thg" x1="0" y1="0" x2="0" y2="1"><stop offset="0" stop-color="#b9c3ca"/><stop offset="0.55" stop-color="#c3c3c3"/><stop offset="0.7" stop-color="#d8b4a0"/><stop offset="1" stop-color="#c9a692"/></linearGradient></defs><rect x="1.5" y="0.2" width="4.4" height="9.4" rx="2.2" fill="url(#thg)" stroke="#9aa0a4" stroke-width="0.5"/><path d="M2.9 1.2v2.5" stroke="#e8f6ff" stroke-width="0.7"/><circle cx="3.7" cy="7.3" r="0.75" fill="#a03a2a"/></svg></div>
<div class="lb" style="top:523.05px;left:16.0px">Core #1 Distance t<span class=el>...</span></div>
<div class="v" style="top:523.05px;right:192.20px">52 °C</div>
<div class="v" style="top:523.05px;right:138.30px">47 °C</div>
<div class="v" style="top:523.05px;right:83.90px">54 °C</div>
<div class="v" style="top:523.05px;right:29.80px">51 °C</div>
<div class="icw" style="top:534.15px;left:5.4px"><svg class="ic" width="10" height="11" viewBox="0 0 10 11"><defs><linearGradient id="thg" x1="0" y1="0" x2="0" y2="1"><stop offset="0" stop-color="#b9c3ca"/><stop offset="0.55" stop-color="#c3c3c3"/><stop offset="0.7" stop-color="#d8b4a0"/><stop offset="1" stop-color="#c9a692"/></linearGradient></defs><rect x="1.5" y="0.2" width="4.4" height="9.4" rx="2.2" fill="url(#thg)" stroke="#9aa0a4" stroke-width="0.5"/><path d="M2.9 1.2v2.5" stroke="#e8f6ff" stroke-width="0.7"/><circle cx="3.7" cy="7.3" r="0.75" fill="#a03a2a"/></svg></div>
<div class="lb" style="top:534.55px;left:16.0px">Core #2 Distance t<span class=el>...</span></div>
<div class="v" style="top:534.55px;right:192.20px">48 °C</div>
<div class="v" style="top:534.55px;right:138.30px">45 °C</div>
<div class="v" style="top:534.55px;right:83.90px">53 °C</div>
<div class="v" style="top:534.55px;right:29.80px">49 °C</div>
<div class="icw" style="top:545.65px;left:5.4px"><svg class="ic" width="10" height="11" viewBox="0 0 10 11"><defs><linearGradient id="thg" x1="0" y1="0" x2="0" y2="1"><stop offset="0" stop-color="#b9c3ca"/><stop offset="0.55" stop-color="#c3c3c3"/><stop offset="0.7" stop-color="#d8b4a0"/><stop offset="1" stop-color="#c9a692"/></linearGradient></defs><rect x="1.5" y="0.2" width="4.4" height="9.4" rx="2.2" fill="url(#thg)" stroke="#9aa0a4" stroke-width="0.5"/><path d="M2.9 1.2v2.5" stroke="#e8f6ff" stroke-width="0.7"/><circle cx="3.7" cy="7.3" r="0.75" fill="#a03a2a"/></svg></div>
<div class="lb" style="top:546.05px;left:16.0px">Core #3 Distance t<span class=el>...</span></div>
<div class="v" style="top:546.05px;right:192.20px">49 °C</div>
<div class="v" style="top:546.05px;right:138.30px">45 °C</div>
<div class="v" style="top:546.05px;right:83.90px">52 °C</div>
<div class="v" style="top:546.05px;right:29.80px">49 °C</div>
<div class="icw" style="top:557.15px;left:5.4px"><svg class="ic" width="10" height="11" viewBox="0 0 10 11"><defs><linearGradient id="thg" x1="0" y1="0" x2="0" y2="1"><stop offset="0" stop-color="#b9c3ca"/><stop offset="0.55" stop-color="#c3c3c3"/><stop offset="0.7" stop-color="#d8b4a0"/><stop offset="1" stop-color="#c9a692"/></linearGradient></defs><rect x="1.5" y="0.2" width="4.4" height="9.4" rx="2.2" fill="url(#thg)" stroke="#9aa0a4" stroke-width="0.5"/><path d="M2.9 1.2v2.5" stroke="#e8f6ff" stroke-width="0.7"/><circle cx="3.7" cy="7.3" r="0.75" fill="#a03a2a"/></svg></div>
<div class="lb" style="top:557.55px;left:16.0px">Core Max</div>
<div class="v" style="top:557.55px;right:192.20px">52 °C</div>
<div class="v" style="top:557.55px;right:138.30px">50 °C</div>
<div class="v" style="top:557.55px;right:83.90px">55 °C</div>
<div class="v" style="top:557.55px;right:29.80px">52 °C</div>
<div class="icw" style="top:568.65px;left:5.4px"><svg class="ic" width="10" height="11" viewBox="0 0 10 11"><circle cx="4.2" cy="5.0" r="3.5" fill="#f4f4f4" stroke="#5a5a5a" stroke-width="1.1"/><path d="M2.9 4.7 Q4.3 4.2 5.7 5.3" fill="none" stroke="#9a9a9a" stroke-width="0.8"/></svg></div>
<div class="lb" style="top:569.05px;left:16.0px">Core #0 Thermal T<span class=el>...</span></div>
<div class="v" style="top:569.05px;right:192.20px">No</div>
<div class="v" style="top:569.05px;right:138.30px">No</div>
<div class="v" style="top:569.05px;right:83.90px">No</div>
<div class="icw" style="top:580.15px;left:5.4px"><svg class="ic" width="10" height="11" viewBox="0 0 10 11"><circle cx="4.2" cy="5.0" r="3.5" fill="#f4f4f4" stroke="#5a5a5a" stroke-width="1.1"/><path d="M2.9 4.7 Q4.3 4.2 5.7 5.3" fill="none" stroke="#9a9a9a" stroke-width="0.8"/></svg></div>
<div class="lb" style="top:580.55px;left:16.0px">Core #1 Thermal T<span class=el>...</span></div>
<div class="v" style="top:580.55px;right:192.20px">No</div>
<div class="v" style="top:580.55px;right:138.30px">No</div>
<div class="v" style="top:580.55px;right:83.90px">No</div>
<div class="icw" style="top:591.65px;left:5.4px"><svg class="ic" width="10" height="11" viewBox="0 0 10 11"><circle cx="4.2" cy="5.0" r="3.5" fill="#f4f4f4" stroke="#5a5a5a" stroke-width="1.1"/><path d="M2.9 4.7 Q4.3 4.2 5.7 5.3" fill="none" stroke="#9a9a9a" stroke-width="0.8"/></svg></div>
<div class="lb" style="top:592.05px;left:16.0px">Core #2 Thermal T<span class=el>...</span></div>
<div class="v" style="top:592.05px;right:192.20px">No</div>
<div class="v" style="top:592.05px;right:138.30px">No</div>
<div class="v" style="top:592.05px;right:83.90px">No</div>
</div>
<div class="panel" style="left:334px;width:331px">
<div class="vl" style="left:88.00px"></div>
<div class="vl" style="left:142.40px"></div>
<div class="vl" style="left:196.70px"></div>
<div class="vl" style="left:251.10px"></div>
<div class="vl" style="left:305.20px"></div>
<div class="hl" style="top:27.25px"></div>
<div class="hl" style="top:38.75px"></div>
<div class="hl" style="top:50.25px"></div>
<div class="hl" style="top:61.75px"></div>
<div class="hl" style="top:73.25px"></div>
<div class="hl" style="top:84.75px"></div>
<div class="hl" style="top:96.25px"></div>
<div class="hl" style="top:107.75px"></div>
<div class="hl" style="top:119.25px"></div>
<div class="hl" style="top:130.75px"></div>
<div class="hl" style="top:142.25px"></div>
<div class="hl" style="top:153.75px"></div>
<div class="hl" style="top:165.25px"></div>
<div class="hl" style="top:176.75px"></div>
<div class="hl" style="top:188.25px"></div>
<div class="hl" style="top:199.75px"></div>
<div class="hl" style="top:211.25px"></div>
<div class="hl" style="top:222.75px"></div>
<div class="hl" style="top:234.25px"></div>
<div class="hl" style="top:245.75px"></div>
<div class="hl" style="top:257.25px"></div>
<div class="hl" style="top:268.75px"></div>
<div class="hl" style="top:280.25px"></div>
<div class="hl" style="top:291.75px"></div>
<div class="hl" style="top:303.25px"></div>
<div class="hl" style="top:314.75px"></div>
<div class="hl" style="top:326.25px"></div>
<div class="hl" style="top:337.75px"></div>
<div class="hl" style="top:349.25px"></div>
<div class="hl" style="top:360.75px"></div>
<div class="hl" style="top:372.25px"></div>
<div class="hl" style="top:383.75px"></div>
<div class="hl" style="top:395.25px"></div>
<div class="hl" style="top:406.75px"></div>
<div class="hl" style="top:418.25px"></div>
<div class="hl" style="top:429.75px"></div>
<div class="hl" style="top:441.25px"></div>
<div class="hl" style="top:452.75px"></div>
<div class="hl" style="top:464.25px"></div>
<div class="hl" style="top:475.75px"></div>
<div class="hl" style="top:487.25px"></div>
<div class="hl" style="top:498.75px"></div>
<div class="hl" style="top:510.25px"></div>
<div class="hl" style="top:521.75px"></div>
<div class="hl" style="top:533.25px"></div>
<div class="hl" style="top:544.75px"></div>
<div class="hl" style="top:556.25px"></div>
<div class="hl" style="top:567.75px"></div>
<div class="hl" style="top:579.25px"></div>
<div class="hl" style="top:590.75px"></div>
<div class="hl" style="top:602.25px"></div>
<div class="hl" style="top:613.75px"></div>
<div class="hd" style="left:3.6px">Sensor</div>
<div class="hd r" style="right:192.60px">Current</div>
<div class="hd r" style="right:138.30px">Minimum</div>
<div class="hd r" style="right:83.90px">Maximum</div>
<div class="hd r" style="right:29.80px">Average</div>
<div class="icw" style="top:16.65px;left:3.6px"><svg class="ic" width="10" height="11" viewBox="0 0 10 11"><circle cx="4.2" cy="5.0" r="3.5" fill="#f4f4f4" stroke="#5a5a5a" stroke-width="1.1"/><path d="M2.9 4.7 Q4.3 4.2 5.7 5.3" fill="none" stroke="#9a9a9a" stroke-width="0.8"/></svg></div>
<div class="lb" style="top:17.05px;left:14.2px">Core #3 Thermal T<span class=el>...</span></div>
<div class="v" style="top:17.05px;right:192.60px">No</div>
<div class="v" style="top:17.05px;right:138.30px">No</div>
<div class="v" style="top:17.05px;right:83.90px">No</div>
<div class="icw" style="top:28.15px;left:3.6px"><svg class="ic" width="10" height="11" viewBox="0 0 10 11"><circle cx="4.2" cy="5.0" r="3.5" fill="#f4f4f4" stroke="#5a5a5a" stroke-width="1.1"/><path d="M2.9 4.7 Q4.3 4.2 5.7 5.3" fill="none" stroke="#9a9a9a" stroke-width="0.8"/></svg></div>
<div class="lb" style="top:28.55px;left:14.2px">Core #0 Critical Te<span class=el>...</span></div>
<div class="v" style="top:28.55px;right:192.60px">No</div>
<div class="v" style="top:28.55px;right:138.30px">No</div>
<div class="v" style="top:28.55px;right:83.90px">No</div>
<div class="icw" style="top:39.65px;left:3.6px"><svg class="ic" width="10" height="11" viewBox="0 0 10 11"><circle cx="4.2" cy="5.0" r="3.5" fill="#f4f4f4" stroke="#5a5a5a" stroke-width="1.1"/><path d="M2.9 4.7 Q4.3 4.2 5.7 5.3" fill="none" stroke="#9a9a9a" stroke-width="0.8"/></svg></div>
<div class="lb" style="top:40.05px;left:14.2px">Core #1 Critical Te<span class=el>...</span></div>
<div class="v" style="top:40.05px;right:192.60px">No</div>
<div class="v" style="top:40.05px;right:138.30px">No</div>
<div class="v" style="top:40.05px;right:83.90px">No</div>
<div class="icw" style="top:51.15px;left:3.6px"><svg class="ic" width="10" height="11" viewBox="0 0 10 11"><circle cx="4.2" cy="5.0" r="3.5" fill="#f4f4f4" stroke="#5a5a5a" stroke-width="1.1"/><path d="M2.9 4.7 Q4.3 4.2 5.7 5.3" fill="none" stroke="#9a9a9a" stroke-width="0.8"/></svg></div>
<div class="lb" style="top:51.55px;left:14.2px">Core #2 Critical Te<span class=el>...</span></div>
<div class="v" style="top:51.55px;right:192.60px">No</div>
<div class="v" style="top:51.55px;right:138.30px">No</div>
<div class="v" style="top:51.55px;right:83.90px">No</div>
<div class="icw" style="top:62.65px;left:3.6px"><svg class="ic" width="10" height="11" viewBox="0 0 10 11"><circle cx="4.2" cy="5.0" r="3.5" fill="#f4f4f4" stroke="#5a5a5a" stroke-width="1.1"/><path d="M2.9 4.7 Q4.3 4.2 5.7 5.3" fill="none" stroke="#9a9a9a" stroke-width="0.8"/></svg></div>
<div class="lb" style="top:63.05px;left:14.2px">Core #3 Critical Te<span class=el>...</span></div>
<div class="v" style="top:63.05px;right:192.60px">No</div>
<div class="v" style="top:63.05px;right:138.30px">No</div>
<div class="v" style="top:63.05px;right:83.90px">No</div>
<div class="icw" style="top:74.15px;left:3.6px"><svg class="ic" width="10" height="11" viewBox="0 0 10 11"><circle cx="4.2" cy="5.0" r="3.5" fill="#f4f4f4" stroke="#5a5a5a" stroke-width="1.1"/><path d="M2.9 4.7 Q4.3 4.2 5.7 5.3" fill="none" stroke="#9a9a9a" stroke-width="0.8"/></svg></div>
<div class="lb" style="top:74.55px;left:14.2px">Core #0 Power Limi<span class=el>...</span></div>
<div class="v" style="top:74.55px;right:192.60px">No</div>
<div class="v" style="top:74.55px;right:138.30px">No</div>
<div class="v" style="top:74.55px;right:83.90px">No</div>
<div class="icw" style="top:85.65px;left:3.6px"><svg class="ic" width="10" height="11" viewBox="0 0 10 11"><circle cx="4.2" cy="5.0" r="3.5" fill="#f4f4f4" stroke="#5a5a5a" stroke-width="1.1"/><path d="M2.9 4.7 Q4.3 4.2 5.7 5.3" fill="none" stroke="#9a9a9a" stroke-width="0.8"/></svg></div>
<div class="lb" style="top:86.05px;left:14.2px">Core #1 Power Limi<span class=el>...</span></div>
<div class="v" style="top:86.05px;right:192.60px">No</div>
<div class="v" style="top:86.05px;right:138.30px">No</div>
<div class="v" style="top:86.05px;right:83.90px">No</div>
<div class="icw" style="top:97.15px;left:3.6px"><svg class="ic" width="10" height="11" viewBox="0 0 10 11"><circle cx="4.2" cy="5.0" r="3.5" fill="#f4f4f4" stroke="#5a5a5a" stroke-width="1.1"/><path d="M2.9 4.7 Q4.3 4.2 5.7 5.3" fill="none" stroke="#9a9a9a" stroke-width="0.8"/></svg></div>
<div class="lb" style="top:97.55px;left:14.2px">Core #2 Power Limi<span class=el>...</span></div>
<div class="v" style="top:97.55px;right:192.60px">No</div>
<div class="v" style="top:97.55px;right:138.30px">No</div>
<div class="v" style="top:97.55px;right:83.90px">No</div>
<div class="icw" style="top:108.65px;left:3.6px"><svg class="ic" width="10" height="11" viewBox="0 0 10 11"><circle cx="4.2" cy="5.0" r="3.5" fill="#f4f4f4" stroke="#5a5a5a" stroke-width="1.1"/><path d="M2.9 4.7 Q4.3 4.2 5.7 5.3" fill="none" stroke="#9a9a9a" stroke-width="0.8"/></svg></div>
<div class="lb" style="top:109.05px;left:14.2px">Core #3 Power Limi<span class=el>...</span></div>
<div class="v" style="top:109.05px;right:192.60px">No</div>
<div class="v" style="top:109.05px;right:138.30px">No</div>
<div class="v" style="top:109.05px;right:83.90px">No</div>
<div class="icw" style="top:120.15px;left:3.6px"><svg class="ic" width="10" height="11" viewBox="0 0 10 11"><circle cx="4.2" cy="5.0" r="3.5" fill="#f4f4f4" stroke="#5a5a5a" stroke-width="1.1"/><path d="M2.9 4.7 Q4.3 4.2 5.7 5.3" fill="none" stroke="#9a9a9a" stroke-width="0.8"/></svg></div>
<div class="lb" style="top:120.55px;left:14.2px">Package/Ring Ther<span class=el>...</span></div>
<div class="v" style="top:120.55px;right:192.60px">No</div>
<div class="v" style="top:120.55px;right:138.30px">No</div>
<div class="v" style="top:120.55px;right:83.90px">No</div>
<div class="icw" style="top:131.65px;left:3.6px"><svg class="ic" width="10" height="11" viewBox="0 0 10 11"><circle cx="4.2" cy="5.0" r="3.5" fill="#f4f4f4" stroke="#5a5a5a" stroke-width="1.1"/><path d="M2.9 4.7 Q4.3 4.2 5.7 5.3" fill="none" stroke="#9a9a9a" stroke-width="0.8"/></svg></div>
<div class="lb" style="top:132.05px;left:14.2px">Package/Ring Critic<span class=el>...</span></div>
<div class="v" style="top:132.05px;right:192.60px">No</div>
<div class="v" style="top:132.05px;right:138.30px">No</div>
<div class="v" style="top:132.05px;right:83.90px">No</div>
<div class="icw" style="top:143.15px;left:3.6px"><svg class="ic" width="10" height="11" viewBox="0 0 10 11"><circle cx="4.2" cy="5.0" r="3.5" fill="#f4f4f4" stroke="#5a5a5a" stroke-width="1.1"/><path d="M2.9 4.7 Q4.3 4.2 5.7 5.3" fill="none" stroke="#9a9a9a" stroke-width="0.8"/></svg></div>
<div class="lb" style="top:143.55px;left:14.2px">Package/Ring Powe<span class=el>...</span></div>
<div class="v" style="top:143.55px;right:192.60px">No</div>
<div class="v" style="top:143.55px;right:138.30px">No</div>
<div class="v" style="top:143.55px;right:83.90px">No</div>
<div class="icw" style="top:166.15px;left:3.6px"><svg class="ic" width="10" height="11" viewBox="0 0 10 11"><defs><linearGradient id="chg" x1="0" y1="0" x2="1" y2="0"><stop offset="0" stop-color="#3a3a3a"/><stop offset="0.45" stop-color="#6e6e6e"/><stop offset="1" stop-color="#383838"/></linearGradient></defs><rect x="1.4" y="0.5" width="5.2" height="8.8" fill="url(#chg)"/><path d="M0.9 1.8h0.6M0.9 3.8h0.6M0.9 5.8h0.6M0.9 7.8h0.6M6.5 1.8h0.6M6.5 3.8h0.6M6.5 5.8h0.6M6.5 7.8h0.6" stroke="#999" stroke-width="0.7"/></svg></div>
<div class="lb g" style="top:166.55px;left:14.2px">CPU [#0]: Intel Cor<span class=el>...</span></div>
<div class="icw" style="top:177.65px;left:3.6px"><svg class="ic" width="10" height="11" viewBox="0 0 10 11"><defs><linearGradient id="thg" x1="0" y1="0" x2="0" y2="1"><stop offset="0" stop-color="#b9c3ca"/><stop offset="0.55" stop-color="#c3c3c3"/><stop offset="0.7" stop-color="#d8b4a0"/><stop offset="1" stop-color="#c9a692"/></linearGradient></defs><rect x="1.5" y="0.2" width="4.4" height="9.4" rx="2.2" fill="url(#thg)" stroke="#9aa0a4" stroke-width="0.5"/><path d="M2.9 1.2v2.5" stroke="#e8f6ff" stroke-width="0.7"/><circle cx="3.7" cy="7.3" r="0.75" fill="#a03a2a"/></svg></div>
<div class="lb" style="top:178.05px;left:14.2px">CPU Package</div>
<div class="v" style="top:178.05px;right:192.60px">51 °C</div>
<div class="v" style="top:178.05px;right:138.30px">49 °C</div>
<div class="v" style="top:178.05px;right:83.90px">55 °C</div>
<div class="v" style="top:178.05px;right:29.80px">52 °C</div>
<div class="icw" style="top:189.15px;left:3.6px"><svg class="ic" width="10" height="11" viewBox="0 0 10 11"><defs><linearGradient id="thg" x1="0" y1="0" x2="0" y2="1"><stop offset="0" stop-color="#b9c3ca"/><stop offset="0.55" stop-color="#c3c3c3"/><stop offset="0.7" stop-color="#d8b4a0"/><stop offset="1" stop-color="#c9a692"/></linearGradient></defs><rect x="1.5" y="0.2" width="4.4" height="9.4" rx="2.2" fill="url(#thg)" stroke="#9aa0a4" stroke-width="0.5"/><path d="M2.9 1.2v2.5" stroke="#e8f6ff" stroke-width="0.7"/><circle cx="3.7" cy="7.3" r="0.75" fill="#a03a2a"/></svg></div>
<div class="lb" style="top:189.55px;left:14.2px">CPU IA Cores</div>
<div class="v" style="top:189.55px;right:192.60px">51 °C</div>
<div class="v" style="top:189.55px;right:138.30px">49 °C</div>
<div class="v" style="top:189.55px;right:83.90px">55 °C</div>
<div class="v" style="top:189.55px;right:29.80px">52 °C</div>
<div class="icw" style="top:200.65px;left:3.6px"><svg class="ic" width="10" height="11" viewBox="0 0 10 11"><defs><linearGradient id="thg" x1="0" y1="0" x2="0" y2="1"><stop offset="0" stop-color="#b9c3ca"/><stop offset="0.55" stop-color="#c3c3c3"/><stop offset="0.7" stop-color="#d8b4a0"/><stop offset="1" stop-color="#c9a692"/></linearGradient></defs><rect x="1.5" y="0.2" width="4.4" height="9.4" rx="2.2" fill="url(#thg)" stroke="#9aa0a4" stroke-width="0.5"/><path d="M2.9 1.2v2.5" stroke="#e8f6ff" stroke-width="0.7"/><circle cx="3.7" cy="7.3" r="0.75" fill="#a03a2a"/></svg></div>
<div class="lb" style="top:201.05px;left:14.2px">CPU GT Cores (Gra<span class=el>...</span></div>
<div class="v" style="top:201.05px;right:192.60px">45 °C</div>
<div class="v" style="top:201.05px;right:138.30px">45 °C</div>
<div class="v" style="top:201.05px;right:83.90px">47 °C</div>
<div class="v" style="top:201.05px;right:29.80px">46 °C</div>
<div class="icw" style="top:212.15px;left:3.6px"><svg class="ic" width="10" height="11" viewBox="0 0 10 11"><path d="M2.4 0.6 L6.5 0.6 L5.3 3.3 L6.7 3.3 L5.4 5.9 L6.3 5.9 L1.8 10.1 L2.9 6.4 L1.9 6.4 L2.8 3.9 L1.8 3.9 Z" fill="#f3d13a" stroke="#b46a1c" stroke-width="0.6" stroke-linejoin="round"/><path d="M3.3 1.2 L2.6 3.4" stroke="#fff6b0" stroke-width="0.6"/></svg></div>
<div class="lb" style="top:212.55px;left:14.2px">iGPU VID</div>
<div class="v" style="top:212.55px;right:192.60px">0.815 V</div>
<div class="v" style="top:212.55px;right:138.30px">0.815 V</div>
<div class="v" style="top:212.55px;right:83.90px">0.815 V</div>
<div class="v" style="top:212.55px;right:29.80px">0.815 V</div>
<div class="icw" style="top:223.65px;left:3.6px"><svg class="ic" width="10" height="11" viewBox="0 0 10 11"><path d="M2.4 0.6 L6.5 0.6 L5.3 3.3 L6.7 3.3 L5.4 5.9 L6.3 5.9 L1.8 10.1 L2.9 6.4 L1.9 6.4 L2.8 3.9 L1.8 3.9 Z" fill="#f3d13a" stroke="#b46a1c" stroke-width="0.6" stroke-linejoin="round"/><path d="M3.3 1.2 L2.6 3.4" stroke="#fff6b0" stroke-width="0.6"/></svg></div>
<div class="lb" style="top:224.05px;left:14.2px">CPU Package Power</div>
<div class="v" style="top:224.05px;right:192.60px">40.797 W</div>
<div class="v" style="top:224.05px;right:138.30px">38.502 W</div>
<div class="v" style="top:224.05px;right:83.90px">44.283 W</div>
<div class="v" style="top:224.05px;right:29.80px">41.015 W</div>
<div class="icw" style="top:235.15px;left:3.6px"><svg class="ic" width="10" height="11" viewBox="0 0 10 11"><path d="M2.4 0.6 L6.5 0.6 L5.3 3.3 L6.7 3.3 L5.4 5.9 L6.3 5.9 L1.8 10.1 L2.9 6.4 L1.9 6.4 L2.8 3.9 L1.8 3.9 Z" fill="#f3d13a" stroke="#b46a1c" stroke-width="0.6" stroke-linejoin="round"/><path d="M3.3 1.2 L2.6 3.4" stroke="#fff6b0" stroke-width="0.6"/></svg></div>
<div class="lb" style="top:235.55px;left:14.2px">IA Cores Power</div>
<div class="v" style="top:235.55px;right:192.60px">35.522 W</div>
<div class="v" style="top:235.55px;right:138.30px">33.271 W</div>
<div class="v" style="top:235.55px;right:83.90px">39.214 W</div>
<div class="v" style="top:235.55px;right:29.80px">35.799 W</div>
<div class="icw" style="top:246.65px;left:3.6px"><svg class="ic" width="10" height="11" viewBox="0 0 10 11"><path d="M2.4 0.6 L6.5 0.6 L5.3 3.3 L6.7 3.3 L5.4 5.9 L6.3 5.9 L1.8 10.1 L2.9 6.4 L1.9 6.4 L2.8 3.9 L1.8 3.9 Z" fill="#f3d13a" stroke="#b46a1c" stroke-width="0.6" stroke-linejoin="round"/><path d="M3.3 1.2 L2.6 3.4" stroke="#fff6b0" stroke-width="0.6"/></svg></div>
<div class="lb" style="top:247.05px;left:14.2px">GT Cores Power</div>
<div class="v" style="top:247.05px;right:192.60px">0.702 W</div>
<div class="v" style="top:247.05px;right:138.30px">0.701 W</div>
<div class="v" style="top:247.05px;right:83.90px">0.703 W</div>
<div class="v" style="top:247.05px;right:29.80px">0.702 W</div>
<div class="icw" style="top:258.15px;left:3.6px"><svg class="ic" width="10" height="11" viewBox="0 0 10 11"><path d="M2.4 0.6 L6.5 0.6 L5.3 3.3 L6.7 3.3 L5.4 5.9 L6.3 5.9 L1.8 10.1 L2.9 6.4 L1.9 6.4 L2.8 3.9 L1.8 3.9 Z" fill="#f3d13a" stroke="#b46a1c" stroke-width="0.6" stroke-linejoin="round"/><path d="M3.3 1.2 L2.6 3.4" stroke="#fff6b0" stroke-width="0.6"/></svg></div>
<div class="lb" style="top:258.55px;left:14.2px">Total DRAM Power</div>
<div class="v" style="top:258.55px;right:192.60px">3.590 W</div>
<div class="v" style="top:258.55px;right:138.30px">2.232 W</div>
<div class="v" style="top:258.55px;right:83.90px">3.602 W</div>
<div class="v" style="top:258.55px;right:29.80px">3.539 W</div>
<div class="icw" style="top:269.65px;left:3.6px"><svg class="ic" width="10" height="11" viewBox="0 0 10 11"><path d="M2.4 0.6 L6.5 0.6 L5.3 3.3 L6.7 3.3 L5.4 5.9 L6.3 5.9 L1.8 10.1 L2.9 6.4 L1.9 6.4 L2.8 3.9 L1.8 3.9 Z" fill="#f3d13a" stroke="#b46a1c" stroke-width="0.6" stroke-linejoin="round"/><path d="M3.3 1.2 L2.6 3.4" stroke="#fff6b0" stroke-width="0.6"/></svg></div>
<div class="lb" style="top:270.05px;left:14.2px">PL1 Power Limit</div>
<div class="v" style="top:270.05px;right:192.60px">4,095.875 W</div>
<div class="v" style="top:270.05px;right:138.30px">4,095.875 W</div>
<div class="v" style="top:270.05px;right:83.90px">4,095.875 W</div>
<div class="v" style="top:270.05px;right:29.80px">4,095.875 W</div>
<div class="icw" style="top:281.15px;left:3.6px"><svg class="ic" width="10" height="11" viewBox="0 0 10 11"><path d="M2.4 0.6 L6.5 0.6 L5.3 3.3 L6.7 3.3 L5.4 5.9 L6.3 5.9 L1.8 10.1 L2.9 6.4 L1.9 6.4 L2.8 3.9 L1.8 3.9 Z" fill="#f3d13a" stroke="#b46a1c" stroke-width="0.6" stroke-linejoin="round"/><path d="M3.3 1.2 L2.6 3.4" stroke="#fff6b0" stroke-width="0.6"/></svg></div>
<div class="lb" style="top:281.55px;left:14.2px">PL2 Power Limit</div>
<div class="v" style="top:281.55px;right:192.60px">4,095.875 W</div>
<div class="v" style="top:281.55px;right:138.30px">4,095.875 W</div>
<div class="v" style="top:281.55px;right:83.90px">4,095.875 W</div>
<div class="v" style="top:281.55px;right:29.80px">4,095.875 W</div>
<div class="icw" style="top:292.65px;left:3.6px"><svg class="ic" width="10" height="11" viewBox="0 0 10 11"><circle cx="4.2" cy="5.0" r="3.5" fill="#f4f4f4" stroke="#5a5a5a" stroke-width="1.1"/><path d="M2.9 4.7 Q4.3 4.2 5.7 5.3" fill="none" stroke="#9a9a9a" stroke-width="0.8"/></svg></div>
<div class="lb" style="top:293.05px;left:14.2px">GPU Clock</div>
<div class="v" style="top:293.05px;right:192.60px">897.1 MHz</div>
<div class="v" style="top:293.05px;right:138.30px">896.9 MHz</div>
<div class="v" style="top:293.05px;right:83.90px">898.9 MHz</div>
<div class="v" style="top:293.05px;right:29.80px">897.8 MHz</div>
<div class="icw" style="top:304.15px;left:3.6px"><svg class="ic" width="10" height="11" viewBox="0 0 10 11"><circle cx="4.2" cy="5.0" r="3.5" fill="#f4f4f4" stroke="#5a5a5a" stroke-width="1.1"/><path d="M2.9 4.7 Q4.3 4.2 5.7 5.3" fill="none" stroke="#9a9a9a" stroke-width="0.8"/></svg></div>
<div class="lb" style="top:304.55px;left:14.2px">GPU D3D Usage</div>
<div class="v" style="top:304.55px;right:192.60px">0.0 %</div>
<div class="v" style="top:304.55px;right:138.30px">0.0 %</div>
<div class="v" style="top:304.55px;right:83.90px">0.0 %</div>
<div class="v" style="top:304.55px;right:29.80px">0.0 %</div>
<div class="icw" style="top:315.65px;left:3.6px"><svg class="ic" width="10" height="11" viewBox="0 0 10 11"><circle cx="4.2" cy="5.0" r="3.5" fill="#f4f4f4" stroke="#5a5a5a" stroke-width="1.1"/><path d="M2.9 4.7 Q4.3 4.2 5.7 5.3" fill="none" stroke="#9a9a9a" stroke-width="0.8"/></svg></div>
<div class="lb" style="top:316.05px;left:14.2px">GPU D3D Memory D<span class=el>...</span></div>
<div class="v" style="top:316.05px;right:192.60px">0 MB</div>
<div class="v" style="top:316.05px;right:138.30px">0 MB</div>
<div class="v" style="top:316.05px;right:83.90px">0 MB</div>
<div class="v" style="top:316.05px;right:29.80px">0 MB</div>
<div class="icw" style="top:327.15px;left:3.6px"><svg class="ic" width="10" height="11" viewBox="0 0 10 11"><circle cx="4.2" cy="5.0" r="3.5" fill="#f4f4f4" stroke="#5a5a5a" stroke-width="1.1"/><path d="M2.9 4.7 Q4.3 4.2 5.7 5.3" fill="none" stroke="#9a9a9a" stroke-width="0.8"/></svg></div>
<div class="lb" style="top:327.55px;left:14.2px">Current cTDP Level</div>
<div class="v" style="top:327.55px;right:192.60px">0</div>
<div class="v" style="top:327.55px;right:138.30px">0</div>
<div class="v" style="top:327.55px;right:83.90px">0</div>
<div class="v" style="top:327.55px;right:29.80px">0</div>
<div class="icw" style="top:350.15px;left:3.6px"><svg class="ic" width="10" height="11" viewBox="0 0 10 11"><defs><linearGradient id="chg" x1="0" y1="0" x2="1" y2="0"><stop offset="0" stop-color="#3a3a3a"/><stop offset="0.45" stop-color="#6e6e6e"/><stop offset="1" stop-color="#383838"/></linearGradient></defs><rect x="1.4" y="0.5" width="5.2" height="8.8" fill="url(#chg)"/><path d="M0.9 1.8h0.6M0.9 3.8h0.6M0.9 5.8h0.6M0.9 7.8h0.6M6.5 1.8h0.6M6.5 3.8h0.6M6.5 5.8h0.6M6.5 7.8h0.6" stroke="#999" stroke-width="0.7"/></svg></div>
<div class="lb g" style="top:350.55px;left:14.2px">CPU [#0]: Intel Cor<span class=el>...</span></div>
<div class="icw" style="top:361.65px;left:3.6px"><svg class="ic" width="10" height="11" viewBox="0 0 10 11"><circle cx="4.2" cy="5.0" r="3.5" fill="#f4f4f4" stroke="#5a5a5a" stroke-width="1.1"/><path d="M2.9 4.7 Q4.3 4.2 5.7 5.3" fill="none" stroke="#9a9a9a" stroke-width="0.8"/></svg></div>
<div class="lb" style="top:362.05px;left:14.2px">Package C2 Reside<span class=el>...</span></div>
<div class="v" style="top:362.05px;right:192.60px">0.0 %</div>
<div class="v" style="top:362.05px;right:138.30px">0.0 %</div>
<div class="v" style="top:362.05px;right:83.90px">0.0 %</div>
<div class="v" style="top:362.05px;right:29.80px">0.0 %</div>
<div class="icw" style="top:373.15px;left:3.6px"><svg class="ic" width="10" height="11" viewBox="0 0 10 11"><circle cx="4.2" cy="5.0" r="3.5" fill="#f4f4f4" stroke="#5a5a5a" stroke-width="1.1"/><path d="M2.9 4.7 Q4.3 4.2 5.7 5.3" fill="none" stroke="#9a9a9a" stroke-width="0.8"/></svg></div>
<div class="lb" style="top:373.55px;left:14.2px">Package C3 Reside<span class=el>...</span></div>
<div class="v" style="top:373.55px;right:192.60px">0.0 %</div>
<div class="v" style="top:373.55px;right:138.30px">0.0 %</div>
<div class="v" style="top:373.55px;right:83.90px">0.0 %</div>
<div class="v" style="top:373.55px;right:29.80px">0.0 %</div>
<div class="icw" style="top:384.65px;left:3.6px"><svg class="ic" width="10" height="11" viewBox="0 0 10 11"><circle cx="4.2" cy="5.0" r="3.5" fill="#f4f4f4" stroke="#5a5a5a" stroke-width="1.1"/><path d="M2.9 4.7 Q4.3 4.2 5.7 5.3" fill="none" stroke="#9a9a9a" stroke-width="0.8"/></svg></div>
<div class="lb" style="top:385.05px;left:14.2px">Core #0 Thread 0 <span class=el>...</span></div>
<div class="v" style="top:385.05px;right:192.60px">100.0 %</div>
<div class="v" style="top:385.05px;right:138.30px">100.0 %</div>
<div class="v" style="top:385.05px;right:83.90px">100.0 %</div>
<div class="v" style="top:385.05px;right:29.80px">100.0 %</div>
<div class="icw" style="top:396.15px;left:3.6px"><svg class="ic" width="10" height="11" viewBox="0 0 10 11"><circle cx="4.2" cy="5.0" r="3.5" fill="#f4f4f4" stroke="#5a5a5a" stroke-width="1.1"/><path d="M2.9 4.7 Q4.3 4.2 5.7 5.3" fill="none" stroke="#9a9a9a" stroke-width="0.8"/></svg></div>
<div class="lb" style="top:396.55px;left:14.2px">Core #0 Thread 1 <span class=el>...</span></div>
<div class="v" style="top:396.55px;right:192.60px">100.0 %</div>
<div class="v" style="top:396.55px;right:138.30px">100.0 %</div>
<div class="v" style="top:396.55px;right:83.90px">100.0 %</div>
<div class="v" style="top:396.55px;right:29.80px">100.0 %</div>
<div class="icw" style="top:407.65px;left:3.6px"><svg class="ic" width="10" height="11" viewBox="0 0 10 11"><circle cx="4.2" cy="5.0" r="3.5" fill="#f4f4f4" stroke="#5a5a5a" stroke-width="1.1"/><path d="M2.9 4.7 Q4.3 4.2 5.7 5.3" fill="none" stroke="#9a9a9a" stroke-width="0.8"/></svg></div>
<div class="lb" style="top:408.05px;left:14.2px">Core #1 Thread 0 <span class=el>...</span></div>
<div class="v" style="top:408.05px;right:192.60px">100.0 %</div>
<div class="v" style="top:408.05px;right:138.30px">100.0 %</div>
<div class="v" style="top:408.05px;right:83.90px">100.0 %</div>
<div class="v" style="top:408.05px;right:29.80px">100.0 %</div>
<div class="icw" style="top:419.15px;left:3.6px"><svg class="ic" width="10" height="11" viewBox="0 0 10 11"><circle cx="4.2" cy="5.0" r="3.5" fill="#f4f4f4" stroke="#5a5a5a" stroke-width="1.1"/><path d="M2.9 4.7 Q4.3 4.2 5.7 5.3" fill="none" stroke="#9a9a9a" stroke-width="0.8"/></svg></div>
<div class="lb" style="top:419.55px;left:14.2px">Core #1 Thread 1 <span class=el>...</span></div>
<div class="v" style="top:419.55px;right:192.60px">100.0 %</div>
<div class="v" style="top:419.55px;right:138.30px">100.0 %</div>
<div class="v" style="top:419.55px;right:83.90px">100.0 %</div>
<div class="v" style="top:419.55px;right:29.80px">100.0 %</div>
<div class="icw" style="top:430.65px;left:3.6px"><svg class="ic" width="10" height="11" viewBox="0 0 10 11"><circle cx="4.2" cy="5.0" r="3.5" fill="#f4f4f4" stroke="#5a5a5a" stroke-width="1.1"/><path d="M2.9 4.7 Q4.3 4.2 5.7 5.3" fill="none" stroke="#9a9a9a" stroke-width="0.8"/></svg></div>
<div class="lb" style="top:431.05px;left:14.2px">Core #2 Thread 0 <span class=el>...</span></div>
<div class="v" style="top:431.05px;right:192.60px">100.0 %</div>
<div class="v" style="top:431.05px;right:138.30px">100.0 %</div>
<div class="v" style="top:431.05px;right:83.90px">100.0 %</div>
<div class="v" style="top:431.05px;right:29.80px">100.0 %</div>
<div class="icw" style="top:442.15px;left:3.6px"><svg class="ic" width="10" height="11" viewBox="0 0 10 11"><circle cx="4.2" cy="5.0" r="3.5" fill="#f4f4f4" stroke="#5a5a5a" stroke-width="1.1"/><path d="M2.9 4.7 Q4.3 4.2 5.7 5.3" fill="none" stroke="#9a9a9a" stroke-width="0.8"/></svg></div>
<div class="lb" style="top:442.55px;left:14.2px">Core #2 Thread 1 <span class=el>...</span></div>
<div class="v" style="top:442.55px;right:192.60px">100.0 %</div>
<div class="v" style="top:442.55px;right:138.30px">100.0 %</div>
<div class="v" style="top:442.55px;right:83.90px">100.0 %</div>
<div class="v" style="top:442.55px;right:29.80px">100.0 %</div>
<div class="icw" style="top:453.65px;left:3.6px"><svg class="ic" width="10" height="11" viewBox="0 0 10 11"><circle cx="4.2" cy="5.0" r="3.5" fill="#f4f4f4" stroke="#5a5a5a" stroke-width="1.1"/><path d="M2.9 4.7 Q4.3 4.2 5.7 5.3" fill="none" stroke="#9a9a9a" stroke-width="0.8"/></svg></div>
<div class="lb" style="top:454.05px;left:14.2px">Core #3 Thread 0 <span class=el>...</span></div>
<div class="v" style="top:454.05px;right:192.60px">100.0 %</div>
<div class="v" style="top:454.05px;right:138.30px">100.0 %</div>
<div class="v" style="top:454.05px;right:83.90px">100.0 %</div>
<div class="v" style="top:454.05px;right:29.80px">100.0 %</div>
<div class="icw" style="top:465.15px;left:3.6px"><svg class="ic" width="10" height="11" viewBox="0 0 10 11"><circle cx="4.2" cy="5.0" r="3.5" fill="#f4f4f4" stroke="#5a5a5a" stroke-width="1.1"/><path d="M2.9 4.7 Q4.3 4.2 5.7 5.3" fill="none" stroke="#9a9a9a" stroke-width="0.8"/></svg></div>
<div class="lb" style="top:465.55px;left:14.2px">Core #3 Thread 1 <span class=el>...</span></div>
<div class="v" style="top:465.55px;right:192.60px">100.0 %</div>
<div class="v" style="top:465.55px;right:138.30px">100.0 %</div>
<div class="v" style="top:465.55px;right:83.90px">100.0 %</div>
<div class="v" style="top:465.55px;right:29.80px">100.0 %</div>
<div class="icw" style="top:476.65px;left:3.6px"><svg class="ic" width="10" height="11" viewBox="0 0 10 11"><circle cx="4.2" cy="5.0" r="3.5" fill="#f4f4f4" stroke="#5a5a5a" stroke-width="1.1"/><path d="M2.9 4.7 Q4.3 4.2 5.7 5.3" fill="none" stroke="#9a9a9a" stroke-width="0.8"/></svg></div>
<div class="lb" style="top:477.05px;left:14.2px">Core #0 C3 Reside<span class=el>...</span></div>
<div class="v" style="top:477.05px;right:192.60px">0.0 %</div>
<div class="v" style="top:477.05px;right:138.30px">0.0 %</div>
<div class="v" style="top:477.05px;right:83.90px">0.0 %</div>
<div class="v" style="top:477.05px;right:29.80px">0.0 %</div>
<div class="icw" style="top:488.15px;left:3.6px"><svg class="ic" width="10" height="11" viewBox="0 0 10 11"><circle cx="4.2" cy="5.0" r="3.5" fill="#f4f4f4" stroke="#5a5a5a" stroke-width="1.1"/><path d="M2.9 4.7 Q4.3 4.2 5.7 5.3" fill="none" stroke="#9a9a9a" stroke-width="0.8"/></svg></div>
<div class="lb" style="top:488.55px;left:14.2px">Core #1 C3 Reside<span class=el>...</span></div>
<div class="v" style="top:488.55px;right:192.60px">0.0 %</div>
<div class="v" style="top:488.55px;right:138.30px">0.0 %</div>
<div class="v" style="top:488.55px;right:83.90px">0.0 %</div>
<div class="v" style="top:488.55px;right:29.80px">0.0 %</div>
<div class="icw" style="top:499.65px;left:3.6px"><svg class="ic" width="10" height="11" viewBox="0 0 10 11"><circle cx="4.2" cy="5.0" r="3.5" fill="#f4f4f4" stroke="#5a5a5a" stroke-width="1.1"/><path d="M2.9 4.7 Q4.3 4.2 5.7 5.3" fill="none" stroke="#9a9a9a" stroke-width="0.8"/></svg></div>
<div class="lb" style="top:500.05px;left:14.2px">Core #2 C3 Reside<span class=el>...</span></div>
<div class="v" style="top:500.05px;right:192.60px">0.0 %</div>
<div class="v" style="top:500.05px;right:138.30px">0.0 %</div>
<div class="v" style="top:500.05px;right:83.90px">0.0 %</div>
<div class="v" style="top:500.05px;right:29.80px">0.0 %</div>
<div class="icw" style="top:511.15px;left:3.6px"><svg class="ic" width="10" height="11" viewBox="0 0 10 11"><circle cx="4.2" cy="5.0" r="3.5" fill="#f4f4f4" stroke="#5a5a5a" stroke-width="1.1"/><path d="M2.9 4.7 Q4.3 4.2 5.7 5.3" fill="none" stroke="#9a9a9a" stroke-width="0.8"/></svg></div>
<div class="lb" style="top:511.55px;left:14.2px">Core #3 C3 Reside<span class=el>...</span></div>
<div class="v" style="top:511.55px;right:192.60px">0.0 %</div>
<div class="v" style="top:511.55px;right:138.30px">0.0 %</div>
<div class="v" style="top:511.55px;right:83.90px">0.0 %</div>
<div class="v" style="top:511.55px;right:29.80px">0.0 %</div>
<div class="icw" style="top:522.65px;left:3.6px"><svg class="ic" width="10" height="11" viewBox="0 0 10 11"><circle cx="4.2" cy="5.0" r="3.5" fill="#f4f4f4" stroke="#5a5a5a" stroke-width="1.1"/><path d="M2.9 4.7 Q4.3 4.2 5.7 5.3" fill="none" stroke="#9a9a9a" stroke-width="0.8"/></svg></div>
<div class="lb" style="top:523.05px;left:14.2px">Core #0 C7 Reside<span class=el>...</span></div>
<div class="v" style="top:523.05px;right:192.60px">0.0 %</div>
<div class="v" style="top:523.05px;right:138.30px">0.0 %</div>
<div class="v" style="top:523.05px;right:83.90px">0.0 %</div>
<div class="v" style="top:523.05px;right:29.80px">0.0 %</div>
<div class="icw" style="top:534.15px;left:3.6px"><svg class="ic" width="10" height="11" viewBox="0 0 10 11"><circle cx="4.2" cy="5.0" r="3.5" fill="#f4f4f4" stroke="#5a5a5a" stroke-width="1.1"/><path d="M2.9 4.7 Q4.3 4.2 5.7 5.3" fill="none" stroke="#9a9a9a" stroke-width="0.8"/></svg></div>
<div class="lb" style="top:534.55px;left:14.2px">Core #1 C7 Reside<span class=el>...</span></div>
<div class="v" style="top:534.55px;right:192.60px">0.0 %</div>
<div class="v" style="top:534.55px;right:138.30px">0.0 %</div>
<div class="v" style="top:534.55px;right:83.90px">0.0 %</div>
<div class="v" style="top:534.55px;right:29.80px">0.0 %</div>
<div class="icw" style="top:545.65px;left:3.6px"><svg class="ic" width="10" height="11" viewBox="0 0 10 11"><circle cx="4.2" cy="5.0" r="3.5" fill="#f4f4f4" stroke="#5a5a5a" stroke-width="1.1"/><path d="M2.9 4.7 Q4.3 4.2 5.7 5.3" fill="none" stroke="#9a9a9a" stroke-width="0.8"/></svg></div>
<div class="lb" style="top:546.05px;left:14.2px">Core #2 C7 Reside<span class=el>...</span></div>
<div class="v" style="top:546.05px;right:192.60px">0.0 %</div>
<div class="v" style="top:546.05px;right:138.30px">0.0 %</div>
<div class="v" style="top:546.05px;right:83.90px">0.0 %</div>
<div class="v" style="top:546.05px;right:29.80px">0.0 %</div>
<div class="icw" style="top:557.15px;left:3.6px"><svg class="ic" width="10" height="11" viewBox="0 0 10 11"><circle cx="4.2" cy="5.0" r="3.5" fill="#f4f4f4" stroke="#5a5a5a" stroke-width="1.1"/><path d="M2.9 4.7 Q4.3 4.2 5.7 5.3" fill="none" stroke="#9a9a9a" stroke-width="0.8"/></svg></div>
<div class="lb" style="top:557.55px;left:14.2px">Core #3 C7 Reside<span class=el>...</span></div>
<div class="v" style="top:557.55px;right:192.60px">0.0 %</div>
<div class="v" style="top:557.55px;right:138.30px">0.0 %</div>
<div class="v" style="top:557.55px;right:83.90px">0.0 %</div>
<div class="v" style="top:557.55px;right:29.80px">0.0 %</div>
<div class="icw" style="top:580.15px;left:3.6px"><svg class="ic" width="10" height="11" viewBox="0 0 10 11"><defs><linearGradient id="chg" x1="0" y1="0" x2="1" y2="0"><stop offset="0" stop-color="#3a3a3a"/><stop offset="0.45" stop-color="#6e6e6e"/><stop offset="1" stop-color="#383838"/></linearGradient></defs><rect x="1.4" y="0.5" width="5.2" height="8.8" fill="url(#chg)"/><path d="M0.9 1.8h0.6M0.9 3.8h0.6M0.9 5.8h0.6M0.9 7.8h0.6M6.5 1.8h0.6M6.5 3.8h0.6M6.5 5.8h0.6M6.5 7.8h0.6" stroke="#999" stroke-width="0.7"/></svg></div>
<div class="lb g" style="top:580.55px;left:14.2px">Memory Timings</div>
<div class="icw" style="top:591.65px;left:3.6px"><svg class="ic" width="10" height="11" viewBox="0 0 10 11"><circle cx="4.2" cy="5.0" r="3.5" fill="#f4f4f4" stroke="#5a5a5a" stroke-width="1.1"/><path d="M2.9 4.7 Q4.3 4.2 5.7 5.3" fill="none" stroke="#9a9a9a" stroke-width="0.8"/></svg></div>
<div class="lb" style="top:592.05px;left:14.2px">Memory Clock</div>
<div class="v" style="top:592.05px;right:192.60px">1,196.2 MHz</div>
<div class="v" style="top:592.05px;right:138.30px">1,195.9 MHz</div>
<div class="v" style="top:592.05px;right:83.90px">1,198.5 MHz</div>
<div class="v" style="top:592.05px;right:29.80px">1,197.1 MHz</div>
</div>
<div class="panel" style="left:666px;width:331px">
<div class="vl" style="left:88.70px"></div>
<div class="vl" style="left:142.80px"></div>
<div class="vl" style="left:196.90px"></div>
<div class="vl" style="left:250.90px"></div>
<div class="vl" style="left:304.90px"></div>
<div class="hl" style="top:27.25px"></div>
<div class="hl" style="top:38.75px"></div>
<div class="hl" style="top:50.25px"></div>
<div class="hl" style="top:61.75px"></div>
<div class="hl" style="top:73.25px"></div>
<div class="hl" style="top:84.75px"></div>
<div class="hl" style="top:96.25px"></div>
<div class="hl" style="top:107.75px"></div>
<div class="hl" style="top:119.25px"></div>
<div class="hl" style="top:130.75px"></div>
<div class="hl" style="top:142.25px"></div>
<div class="hl" style="top:153.75px"></div>
<div class="hl" style="top:165.25px"></div>
<div class="hl" style="top:176.75px"></div>
<div class="hl" style="top:188.25px"></div>
<div class="hl" style="top:199.75px"></div>
<div class="hl" style="top:211.25px"></div>
<div class="hl" style="top:222.75px"></div>
<div class="hl" style="top:234.25px"></div>
<div class="hl" style="top:245.75px"></div>
<div class="hl" style="top:257.25px"></div>
<div class="hl" style="top:268.75px"></div>
<div class="hl" style="top:280.25px"></div>
<div class="hl" style="top:291.75px"></div>
<div class="hl" style="top:303.25px"></div>
<div class="hl" style="top:314.75px"></div>
<div class="hl" style="top:326.25px"></div>
<div class="hl" style="top:337.75px"></div>
<div class="hl" style="top:349.25px"></div>
<div class="hl" style="top:360.75px"></div>
<div class="hl" style="top:372.25px"></div>
<div class="hl" style="top:383.75px"></div>
<div class="hl" style="top:395.25px"></div>
<div class="hl" style="top:406.75px"></div>
<div class="hl" style="top:418.25px"></div>
<div class="hl" style="top:429.75px"></div>
<div class="hl" style="top:441.25px"></div>
<div class="hl" style="top:452.75px"></div>
<div class="hl" style="top:464.25px"></div>
<div class="hl" style="top:475.75px"></div>
<div class="hl" style="top:487.25px"></div>
<div class="hl" style="top:498.75px"></div>
<div class="hl" style="top:510.25px"></div>
<div class="hl" style="top:521.75px"></div>
<div class="hl" style="top:533.25px"></div>
<div class="hl" style="top:544.75px"></div>
<div class="hl" style="top:556.25px"></div>
<div class="hl" style="top:567.75px"></div>
<div class="hl" style="top:579.25px"></div>
<div class="hl" style="top:590.75px"></div>
<div class="hl" style="top:602.25px"></div>
<div class="hl" style="top:613.75px"></div>
<div class="hd" style="left:3.6px">Sensor</div>
<div class="hd r" style="right:192.20px">Current</div>
<div class="hd r" style="right:138.10px">Minimum</div>
<div class="hd r" style="right:84.10px">Maximum</div>
<div class="hd r" style="right:30.10px">Average</div>
<div class="icw" style="top:16.65px;left:4.5px"><svg class="ic" width="10" height="11" viewBox="0 0 10 11"><circle cx="4.2" cy="5.0" r="3.5" fill="#f4f4f4" stroke="#5a5a5a" stroke-width="1.1"/><path d="M2.9 4.7 Q4.3 4.2 5.7 5.3" fill="none" stroke="#9a9a9a" stroke-width="0.8"/></svg></div>
<div class="lb" style="top:17.05px;left:15.1px">Memory Clock Ratio</div>
<div class="v" style="top:17.05px;right:192.20px">12.00 x</div>
<div class="v" style="top:17.05px;right:138.10px">12.00 x</div>
<div class="v" style="top:17.05px;right:84.10px">12.00 x</div>
<div class="v" style="top:17.05px;right:30.10px">12.00 x</div>
<div class="icw" style="top:28.15px;left:4.5px"><svg class="ic" width="10" height="11" viewBox="0 0 10 11"><circle cx="4.2" cy="5.0" r="3.5" fill="#f4f4f4" stroke="#5a5a5a" stroke-width="1.1"/><path d="M2.9 4.7 Q4.3 4.2 5.7 5.3" fill="none" stroke="#9a9a9a" stroke-width="0.8"/></svg></div>
<div class="lb" style="top:28.55px;left:15.1px">Tcas</div>
<div class="v" style="top:28.55px;right:192.20px">17 T</div>
<div class="v" style="top:28.55px;right:138.10px">17 T</div>
<div class="v" style="top:28.55px;right:84.10px">17 T</div>
<div class="icw" style="top:39.65px;left:4.5px"><svg class="ic" width="10" height="11" viewBox="0 0 10 11"><circle cx="4.2" cy="5.0" r="3.5" fill="#f4f4f4" stroke="#5a5a5a" stroke-width="1.1"/><path d="M2.9 4.7 Q4.3 4.2 5.7 5.3" fill="none" stroke="#9a9a9a" stroke-width="0.8"/></svg></div>
<div class="lb" style="top:40.05px;left:15.1px">Trcd</div>
<div class="v" style="top:40.05px;right:192.20px">17 T</div>
<div class="v" style="top:40.05px;right:138.10px">17 T</div>
<div class="v" style="top:40.05px;right:84.10px">17 T</div>
<div class="icw" style="top:51.15px;left:4.5px"><svg class="ic" width="10" height="11" viewBox="0 0 10 11"><circle cx="4.2" cy="5.0" r="3.5" fill="#f4f4f4" stroke="#5a5a5a" stroke-width="1.1"/><path d="M2.9 4.7 Q4.3 4.2 5.7 5.3" fill="none" stroke="#9a9a9a" stroke-width="0.8"/></svg></div>
<div class="lb" style="top:51.55px;left:15.1px">Trp</div>
<div class="v" style="top:51.55px;right:192.20px">17 T</div>
<div class="v" style="top:51.55px;right:138.10px">17 T</div>
<div class="v" style="top:51.55px;right:84.10px">17 T</div>
<div class="icw" style="top:62.65px;left:4.5px"><svg class="ic" width="10" height="11" viewBox="0 0 10 11"><circle cx="4.2" cy="5.0" r="3.5" fill="#f4f4f4" stroke="#5a5a5a" stroke-width="1.1"/><path d="M2.9 4.7 Q4.3 4.2 5.7 5.3" fill="none" stroke="#9a9a9a" stroke-width="0.8"/></svg></div>
<div class="lb" style="top:63.05px;left:15.1px">Tras</div>
<div class="v" style="top:63.05px;right:192.20px">39 T</div>
<div class="v" style="top:63.05px;right:138.10px">39 T</div>
<div class="v" style="top:63.05px;right:84.10px">39 T</div>
<div class="icw" style="top:74.15px;left:4.5px"><svg class="ic" width="10" height="11" viewBox="0 0 10 11"><circle cx="4.2" cy="5.0" r="3.5" fill="#f4f4f4" stroke="#5a5a5a" stroke-width="1.1"/><path d="M2.9 4.7 Q4.3 4.2 5.7 5.3" fill="none" stroke="#9a9a9a" stroke-width="0.8"/></svg></div>
<div class="lb" style="top:74.55px;left:15.1px">Trfc</div>
<div class="v" style="top:74.55px;right:192.20px">421 T</div>
<div class="v" style="top:74.55px;right:138.10px">421 T</div>
<div class="v" style="top:74.55px;right:84.10px">421 T</div>
<div class="icw" style="top:85.65px;left:4.5px"><svg class="ic" width="10" height="11" viewBox="0 0 10 11"><circle cx="4.2" cy="5.0" r="3.5" fill="#f4f4f4" stroke="#5a5a5a" stroke-width="1.1"/><path d="M2.9 4.7 Q4.3 4.2 5.7 5.3" fill="none" stroke="#9a9a9a" stroke-width="0.8"/></svg></div>
<div class="lb" style="top:86.05px;left:15.1px">Command Rate</div>
<div class="v" style="top:86.05px;right:192.20px">2 T</div>
<div class="v" style="top:86.05px;right:138.10px">2 T</div>
<div class="v" style="top:86.05px;right:84.10px">2 T</div>
<div class="icw" style="top:108.65px;left:4.5px"><svg class="ic" width="10" height="11" viewBox="0 0 10 11"><defs><linearGradient id="chg" x1="0" y1="0" x2="1" y2="0"><stop offset="0" stop-color="#3a3a3a"/><stop offset="0.45" stop-color="#6e6e6e"/><stop offset="1" stop-color="#383838"/></linearGradient></defs><rect x="1.4" y="0.5" width="5.2" height="8.8" fill="url(#chg)"/><path d="M0.9 1.8h0.6M0.9 3.8h0.6M0.9 5.8h0.6M0.9 7.8h0.6M6.5 1.8h0.6M6.5 3.8h0.6M6.5 5.8h0.6M6.5 7.8h0.6" stroke="#999" stroke-width="0.7"/></svg></div>
<div class="lb g" style="top:109.05px;left:15.1px">CPU [#0]: Intel Cor<span class=el>...</span></div>
<div class="icw" style="top:120.15px;left:4.5px"><svg class="ic" width="10" height="11" viewBox="0 0 10 11"><circle cx="4.2" cy="5.0" r="3.5" fill="#f4f4f4" stroke="#5a5a5a" stroke-width="1.1"/><path d="M2.9 4.7 Q4.3 4.2 5.7 5.3" fill="none" stroke="#9a9a9a" stroke-width="0.8"/></svg></div>
<div class="lb" style="top:120.55px;left:15.1px">IA: PROCHOT</div>
<div class="v" style="top:120.55px;right:192.20px">No</div>
<div class="v" style="top:120.55px;right:138.10px">No</div>
<div class="v" style="top:120.55px;right:84.10px">No</div>
<div class="icw" style="top:131.65px;left:4.5px"><svg class="ic" width="10" height="11" viewBox="0 0 10 11"><circle cx="4.2" cy="5.0" r="3.5" fill="#f4f4f4" stroke="#5a5a5a" stroke-width="1.1"/><path d="M2.9 4.7 Q4.3 4.2 5.7 5.3" fill="none" stroke="#9a9a9a" stroke-width="0.8"/></svg></div>
<div class="lb" style="top:132.05px;left:15.1px">IA: Thermal Event</div>
<div class="v" style="top:132.05px;right:192.20px">No</div>
<div class="v" style="top:132.05px;right:138.10px">No</div>
<div class="v" style="top:132.05px;right:84.10px">No</div>
<div class="icw" style="top:143.15px;left:4.5px"><svg class="ic" width="10" height="11" viewBox="0 0 10 11"><circle cx="4.2" cy="5.0" r="3.5" fill="#f4f4f4" stroke="#5a5a5a" stroke-width="1.1"/><path d="M2.9 4.7 Q4.3 4.2 5.7 5.3" fill="none" stroke="#9a9a9a" stroke-width="0.8"/></svg></div>
<div class="lb" style="top:143.55px;left:15.1px">IA: DDR RAPL</div>
<div class="v" style="top:143.55px;right:192.20px">No</div>
<div class="v" style="top:143.55px;right:138.10px">No</div>
<div class="v" style="top:143.55px;right:84.10px">No</div>
<div class="icw" style="top:154.65px;left:4.5px"><svg class="ic" width="10" height="11" viewBox="0 0 10 11"><circle cx="4.2" cy="5.0" r="3.5" fill="#f4f4f4" stroke="#5a5a5a" stroke-width="1.1"/><path d="M2.9 4.7 Q4.3 4.2 5.7 5.3" fill="none" stroke="#9a9a9a" stroke-width="0.8"/></svg></div>
<div class="lb" style="top:155.05px;left:15.1px">IA: PCS (PECI)</div>
<div class="v" style="top:155.05px;right:192.20px">No</div>
<div class="v" style="top:155.05px;right:138.10px">No</div>
<div class="v" style="top:155.05px;right:84.10px">No</div>
<div class="icw" style="top:166.15px;left:4.5px"><svg class="ic" width="10" height="11" viewBox="0 0 10 11"><circle cx="4.2" cy="5.0" r="3.5" fill="#f4f4f4" stroke="#5a5a5a" stroke-width="1.1"/><path d="M2.9 4.7 Q4.3 4.2 5.7 5.3" fill="none" stroke="#9a9a9a" stroke-width="0.8"/></svg></div>
<div class="lb" style="top:166.55px;left:15.1px">IA: Residency Stat<span class=el>...</span></div>
<div class="v" style="top:166.55px;right:192.20px">No</div>
<div class="v" style="top:166.55px;right:138.10px">No</div>
<div class="v" style="top:166.55px;right:84.10px">No</div>
<div class="icw" style="top:177.65px;left:4.5px"><svg class="ic" width="10" height="11" viewBox="0 0 10 11"><circle cx="4.2" cy="5.0" r="3.5" fill="#f4f4f4" stroke="#5a5a5a" stroke-width="1.1"/><path d="M2.9 4.7 Q4.3 4.2 5.7 5.3" fill="none" stroke="#9a9a9a" stroke-width="0.8"/></svg></div>
<div class="lb" style="top:178.05px;left:15.1px">IA: Running Averag<span class=el>...</span></div>
<div class="v" style="top:178.05px;right:192.20px">No</div>
<div class="v" style="top:178.05px;right:138.10px">No</div>
<div class="v" style="top:178.05px;right:84.10px">No</div>
<div class="icw" style="top:189.15px;left:4.5px"><svg class="ic" width="10" height="11" viewBox="0 0 10 11"><circle cx="4.2" cy="5.0" r="3.5" fill="#f4f4f4" stroke="#5a5a5a" stroke-width="1.1"/><path d="M2.9 4.7 Q4.3 4.2 5.7 5.3" fill="none" stroke="#9a9a9a" stroke-width="0.8"/></svg></div>
<div class="lb" style="top:189.55px;left:15.1px">IA: VR Thermal Alert</div>
<div class="v" style="top:189.55px;right:192.20px">No</div>
<div class="v" style="top:189.55px;right:138.10px">No</div>
<div class="v" style="top:189.55px;right:84.10px">No</div>
<div class="icw" style="top:200.65px;left:4.5px"><svg class="ic" width="10" height="11" viewBox="0 0 10 11"><circle cx="4.2" cy="5.0" r="3.5" fill="#f4f4f4" stroke="#5a5a5a" stroke-width="1.1"/><path d="M2.9 4.7 Q4.3 4.2 5.7 5.3" fill="none" stroke="#9a9a9a" stroke-width="0.8"/></svg></div>
<div class="lb" style="top:201.05px;left:15.1px">IA: VR TDC</div>
<div class="v" style="top:201.05px;right:192.20px">No</div>
<div class="v" style="top:201.05px;right:138.10px">No</div>
<div class="v" style="top:201.05px;right:84.10px">No</div>
<div class="icw" style="top:212.15px;left:4.5px"><svg class="ic" width="10" height="11" viewBox="0 0 10 11"><circle cx="4.2" cy="5.0" r="3.5" fill="#f4f4f4" stroke="#5a5a5a" stroke-width="1.1"/><path d="M2.9 4.7 Q4.3 4.2 5.7 5.3" fill="none" stroke="#9a9a9a" stroke-width="0.8"/></svg></div>
<div class="lb" style="top:212.55px;left:15.1px">IA: Electrical Design<span class=el>...</span></div>
<div class="v" style="top:212.55px;right:192.20px">No</div>
<div class="v" style="top:212.55px;right:138.10px">No</div>
<div class="v" style="top:212.55px;right:84.10px">No</div>
<div class="icw" style="top:223.65px;left:4.5px"><svg class="ic" width="10" height="11" viewBox="0 0 10 11"><circle cx="4.2" cy="5.0" r="3.5" fill="#f4f4f4" stroke="#5a5a5a" stroke-width="1.1"/><path d="M2.9 4.7 Q4.3 4.2 5.7 5.3" fill="none" stroke="#9a9a9a" stroke-width="0.8"/></svg></div>
<div class="lb" style="top:224.05px;left:15.1px">IA: Package-Level <span class=el>...</span></div>
<div class="v" style="top:224.05px;right:192.20px">No</div>
<div class="v" style="top:224.05px;right:138.10px">No</div>
<div class="v" style="top:224.05px;right:84.10px">No</div>
<div class="icw" style="top:235.15px;left:4.5px"><svg class="ic" width="10" height="11" viewBox="0 0 10 11"><circle cx="4.2" cy="5.0" r="3.5" fill="#f4f4f4" stroke="#5a5a5a" stroke-width="1.1"/><path d="M2.9 4.7 Q4.3 4.2 5.7 5.3" fill="none" stroke="#9a9a9a" stroke-width="0.8"/></svg></div>
<div class="lb" style="top:235.55px;left:15.1px">IA: Package-Level <span class=el>...</span></div>
<div class="v" style="top:235.55px;right:192.20px">No</div>
<div class="v" style="top:235.55px;right:138.10px">No</div>
<div class="v" style="top:235.55px;right:84.10px">No</div>
<div class="icw" style="top:246.65px;left:4.5px"><svg class="ic" width="10" height="11" viewBox="0 0 10 11"><circle cx="4.2" cy="5.0" r="3.5" fill="#f4f4f4" stroke="#5a5a5a" stroke-width="1.1"/><path d="M2.9 4.7 Q4.3 4.2 5.7 5.3" fill="none" stroke="#9a9a9a" stroke-width="0.8"/></svg></div>
<div class="lb" style="top:247.05px;left:15.1px">IA: Max Turbo Limit</div>
<div class="v" style="top:247.05px;right:192.20px">Yes</div>
<div class="v" style="top:247.05px;right:138.10px">Yes</div>
<div class="v" style="top:247.05px;right:84.10px">Yes</div>
<div class="icw" style="top:258.15px;left:4.5px"><svg class="ic" width="10" height="11" viewBox="0 0 10 11"><circle cx="4.2" cy="5.0" r="3.5" fill="#f4f4f4" stroke="#5a5a5a" stroke-width="1.1"/><path d="M2.9 4.7 Q4.3 4.2 5.7 5.3" fill="none" stroke="#9a9a9a" stroke-width="0.8"/></svg></div>
<div class="lb" style="top:258.55px;left:15.1px">IA: Turbo Attenuati<span class=el>...</span></div>
<div class="v" style="top:258.55px;right:192.20px">No</div>
<div class="v" style="top:258.55px;right:138.10px">No</div>
<div class="v" style="top:258.55px;right:84.10px">No</div>
<div class="icw" style="top:269.65px;left:4.5px"><svg class="ic" width="10" height="11" viewBox="0 0 10 11"><circle cx="4.2" cy="5.0" r="3.5" fill="#f4f4f4" stroke="#5a5a5a" stroke-width="1.1"/><path d="M2.9 4.7 Q4.3 4.2 5.7 5.3" fill="none" stroke="#9a9a9a" stroke-width="0.8"/></svg></div>
<div class="lb" style="top:270.05px;left:15.1px">GT: Thermal Event</div>
<div class="v" style="top:270.05px;right:192.20px">No</div>
<div class="v" style="top:270.05px;right:138.10px">No</div>
<div class="v" style="top:270.05px;right:84.10px">No</div>
<div class="icw" style="top:281.15px;left:4.5px"><svg class="ic" width="10" height="11" viewBox="0 0 10 11"><circle cx="4.2" cy="5.0" r="3.5" fill="#f4f4f4" stroke="#5a5a5a" stroke-width="1.1"/><path d="M2.9 4.7 Q4.3 4.2 5.7 5.3" fill="none" stroke="#9a9a9a" stroke-width="0.8"/></svg></div>
<div class="lb" style="top:281.55px;left:15.1px">GT: DDR RAPL</div>
<div class="v" style="top:281.55px;right:192.20px">No</div>
<div class="v" style="top:281.55px;right:138.10px">No</div>
<div class="v" style="top:281.55px;right:84.10px">No</div>
<div class="icw" style="top:292.65px;left:4.5px"><svg class="ic" width="10" height="11" viewBox="0 0 10 11"><circle cx="4.2" cy="5.0" r="3.5" fill="#f4f4f4" stroke="#5a5a5a" stroke-width="1.1"/><path d="M2.9 4.7 Q4.3 4.2 5.7 5.3" fill="none" stroke="#9a9a9a" stroke-width="0.8"/></svg></div>
<div class="lb" style="top:293.05px;left:15.1px">GT: Residency Stat<span class=el>...</span></div>
<div class="v" style="top:293.05px;right:192.20px">No</div>
<div class="v" style="top:293.05px;right:138.10px">No</div>
<div class="v" style="top:293.05px;right:84.10px">No</div>
<div class="icw" style="top:304.15px;left:4.5px"><svg class="ic" width="10" height="11" viewBox="0 0 10 11"><circle cx="4.2" cy="5.0" r="3.5" fill="#f4f4f4" stroke="#5a5a5a" stroke-width="1.1"/><path d="M2.9 4.7 Q4.3 4.2 5.7 5.3" fill="none" stroke="#9a9a9a" stroke-width="0.8"/></svg></div>
<div class="lb" style="top:304.55px;left:15.1px">GT: Running Avera<span class=el>...</span></div>
<div class="v" style="top:304.55px;right:192.20px">No</div>
<div class="v" style="top:304.55px;right:138.10px">No</div>
<div class="v" style="top:304.55px;right:84.10px">No</div>
<div class="icw" style="top:315.65px;left:4.5px"><svg class="ic" width="10" height="11" viewBox="0 0 10 11"><circle cx="4.2" cy="5.0" r="3.5" fill="#f4f4f4" stroke="#5a5a5a" stroke-width="1.1"/><path d="M2.9 4.7 Q4.3 4.2 5.7 5.3" fill="none" stroke="#9a9a9a" stroke-width="0.8"/></svg></div>
<div class="lb" style="top:316.05px;left:15.1px">GT: VR Thermal Alert</div>
<div class="v" style="top:316.05px;right:192.20px">No</div>
<div class="v" style="top:316.05px;right:138.10px">No</div>
<div class="v" style="top:316.05px;right:84.10px">No</div>
<div class="icw" style="top:327.15px;left:4.5px"><svg class="ic" width="10" height="11" viewBox="0 0 10 11"><circle cx="4.2" cy="5.0" r="3.5" fill="#f4f4f4" stroke="#5a5a5a" stroke-width="1.1"/><path d="M2.9 4.7 Q4.3 4.2 5.7 5.3" fill="none" stroke="#9a9a9a" stroke-width="0.8"/></svg></div>
<div class="lb" style="top:327.55px;left:15.1px">GT: VR TDC</div>
<div class="v" style="top:327.55px;right:192.20px">No</div>
<div class="v" style="top:327.55px;right:138.10px">No</div>
<div class="v" style="top:327.55px;right:84.10px">No</div>
<div class="icw" style="top:338.65px;left:4.5px"><svg class="ic" width="10" height="11" viewBox="0 0 10 11"><circle cx="4.2" cy="5.0" r="3.5" fill="#f4f4f4" stroke="#5a5a5a" stroke-width="1.1"/><path d="M2.9 4.7 Q4.3 4.2 5.7 5.3" fill="none" stroke="#9a9a9a" stroke-width="0.8"/></svg></div>
<div class="lb" style="top:339.05px;left:15.1px">GT: Max VR Voltage<span class=el>...</span></div>
<div class="v" style="top:339.05px;right:192.20px">No</div>
<div class="v" style="top:339.05px;right:138.10px">No</div>
<div class="v" style="top:339.05px;right:84.10px">No</div>
<div class="icw" style="top:350.15px;left:4.5px"><svg class="ic" width="10" height="11" viewBox="0 0 10 11"><circle cx="4.2" cy="5.0" r="3.5" fill="#f4f4f4" stroke="#5a5a5a" stroke-width="1.1"/><path d="M2.9 4.7 Q4.3 4.2 5.7 5.3" fill="none" stroke="#9a9a9a" stroke-width="0.8"/></svg></div>
<div class="lb" style="top:350.55px;left:15.1px">GT: Domain-Level P<span class=el>...</span></div>
<div class="v" style="top:350.55px;right:192.20px">No</div>
<div class="v" style="top:350.55px;right:138.10px">No</div>
<div class="v" style="top:350.55px;right:84.10px">No</div>
<div class="icw" style="top:361.65px;left:4.5px"><svg class="ic" width="10" height="11" viewBox="0 0 10 11"><circle cx="4.2" cy="5.0" r="3.5" fill="#f4f4f4" stroke="#5a5a5a" stroke-width="1.1"/><path d="M2.9 4.7 Q4.3 4.2 5.7 5.3" fill="none" stroke="#9a9a9a" stroke-width="0.8"/></svg></div>
<div class="lb" style="top:362.05px;left:15.1px">GT: Package-Level <span class=el>...</span></div>
<div class="v" style="top:362.05px;right:192.20px">No</div>
<div class="v" style="top:362.05px;right:138.10px">No</div>
<div class="v" style="top:362.05px;right:84.10px">No</div>
<div class="icw" style="top:373.15px;left:4.5px"><svg class="ic" width="10" height="11" viewBox="0 0 10 11"><circle cx="4.2" cy="5.0" r="3.5" fill="#f4f4f4" stroke="#5a5a5a" stroke-width="1.1"/><path d="M2.9 4.7 Q4.3 4.2 5.7 5.3" fill="none" stroke="#9a9a9a" stroke-width="0.8"/></svg></div>
<div class="lb" style="top:373.55px;left:15.1px">GT: Package-Level <span class=el>...</span></div>
<div class="v" style="top:373.55px;right:192.20px">No</div>
<div class="v" style="top:373.55px;right:138.10px">No</div>
<div class="v" style="top:373.55px;right:84.10px">No</div>
<div class="icw" style="top:384.65px;left:4.5px"><svg class="ic" width="10" height="11" viewBox="0 0 10 11"><circle cx="4.2" cy="5.0" r="3.5" fill="#f4f4f4" stroke="#5a5a5a" stroke-width="1.1"/><path d="M2.9 4.7 Q4.3 4.2 5.7 5.3" fill="none" stroke="#9a9a9a" stroke-width="0.8"/></svg></div>
<div class="lb" style="top:385.05px;left:15.1px">GT: Inefficient Ope<span class=el>...</span></div>
<div class="v" style="top:385.05px;right:192.20px">No</div>
<div class="v" style="top:385.05px;right:138.10px">No</div>
<div class="v" style="top:385.05px;right:84.10px">No</div>
<div class="icw" style="top:396.15px;left:4.5px"><svg class="ic" width="10" height="11" viewBox="0 0 10 11"><circle cx="4.2" cy="5.0" r="3.5" fill="#f4f4f4" stroke="#5a5a5a" stroke-width="1.1"/><path d="M2.9 4.7 Q4.3 4.2 5.7 5.3" fill="none" stroke="#9a9a9a" stroke-width="0.8"/></svg></div>
<div class="lb" style="top:396.55px;left:15.1px">GT: Fuses limit</div>
<div class="v" style="top:396.55px;right:192.20px">No</div>
<div class="v" style="top:396.55px;right:138.10px">No</div>
<div class="v" style="top:396.55px;right:84.10px">No</div>
<div class="icw" style="top:407.65px;left:4.5px"><svg class="ic" width="10" height="11" viewBox="0 0 10 11"><circle cx="4.2" cy="5.0" r="3.5" fill="#f4f4f4" stroke="#5a5a5a" stroke-width="1.1"/><path d="M2.9 4.7 Q4.3 4.2 5.7 5.3" fill="none" stroke="#9a9a9a" stroke-width="0.8"/></svg></div>
<div class="lb" style="top:408.05px;left:15.1px">RING: Residency St<span class=el>...</span></div>
<div class="v" style="top:408.05px;right:192.20px">No</div>
<div class="v" style="top:408.05px;right:138.10px">No</div>
<div class="v" style="top:408.05px;right:84.10px">No</div>
<div class="icw" style="top:419.15px;left:4.5px"><svg class="ic" width="10" height="11" viewBox="0 0 10 11"><circle cx="4.2" cy="5.0" r="3.5" fill="#f4f4f4" stroke="#5a5a5a" stroke-width="1.1"/><path d="M2.9 4.7 Q4.3 4.2 5.7 5.3" fill="none" stroke="#9a9a9a" stroke-width="0.8"/></svg></div>
<div class="lb" style="top:419.55px;left:15.1px">RING: VR Thermal <span class=el>...</span></div>
<div class="v" style="top:419.55px;right:192.20px">No</div>
<div class="v" style="top:419.55px;right:138.10px">No</div>
<div class="v" style="top:419.55px;right:84.10px">No</div>
<div class="icw" style="top:430.65px;left:4.5px"><svg class="ic" width="10" height="11" viewBox="0 0 10 11"><circle cx="4.2" cy="5.0" r="3.5" fill="#f4f4f4" stroke="#5a5a5a" stroke-width="1.1"/><path d="M2.9 4.7 Q4.3 4.2 5.7 5.3" fill="none" stroke="#9a9a9a" stroke-width="0.8"/></svg></div>
<div class="lb" style="top:431.05px;left:15.1px">RING: VR TDC</div>
<div class="v" style="top:431.05px;right:192.20px">No</div>
<div class="v" style="top:431.05px;right:138.10px">No</div>
<div class="v" style="top:431.05px;right:84.10px">No</div>
<div class="icw" style="top:442.15px;left:4.5px"><svg class="ic" width="10" height="11" viewBox="0 0 10 11"><circle cx="4.2" cy="5.0" r="3.5" fill="#f4f4f4" stroke="#5a5a5a" stroke-width="1.1"/><path d="M2.9 4.7 Q4.3 4.2 5.7 5.3" fill="none" stroke="#9a9a9a" stroke-width="0.8"/></svg></div>
<div class="lb" style="top:442.55px;left:15.1px">RING: Max VR Volta<span class=el>...</span></div>
<div class="v" style="top:442.55px;right:192.20px">No</div>
<div class="v" style="top:442.55px;right:138.10px">No</div>
<div class="v" style="top:442.55px;right:84.10px">No</div>
<div class="icw" style="top:453.65px;left:4.5px"><svg class="ic" width="10" height="11" viewBox="0 0 10 11"><circle cx="4.2" cy="5.0" r="3.5" fill="#f4f4f4" stroke="#5a5a5a" stroke-width="1.1"/><path d="M2.9 4.7 Q4.3 4.2 5.7 5.3" fill="none" stroke="#9a9a9a" stroke-width="0.8"/></svg></div>
<div class="lb" style="top:454.05px;left:15.1px">RING: Package-Lev<span class=el>...</span></div>
<div class="v" style="top:454.05px;right:192.20px">No</div>
<div class="v" style="top:454.05px;right:138.10px">No</div>
<div class="v" style="top:454.05px;right:84.10px">No</div>
<div class="icw" style="top:465.15px;left:4.5px"><svg class="ic" width="10" height="11" viewBox="0 0 10 11"><circle cx="4.2" cy="5.0" r="3.5" fill="#f4f4f4" stroke="#5a5a5a" stroke-width="1.1"/><path d="M2.9 4.7 Q4.3 4.2 5.7 5.3" fill="none" stroke="#9a9a9a" stroke-width="0.8"/></svg></div>
<div class="lb" style="top:465.55px;left:15.1px">RING: Package-Lev<span class=el>...</span></div>
<div class="v" style="top:465.55px;right:192.20px">No</div>
<div class="v" style="top:465.55px;right:138.10px">No</div>
<div class="v" style="top:465.55px;right:84.10px">No</div>
<div class="icw" style="top:488.15px;left:4.5px"><svg class="ic" width="10" height="11" viewBox="0 0 10 11"><defs><linearGradient id="chg" x1="0" y1="0" x2="1" y2="0"><stop offset="0" stop-color="#3a3a3a"/><stop offset="0.45" stop-color="#6e6e6e"/><stop offset="1" stop-color="#383838"/></linearGradient></defs><rect x="1.4" y="0.5" width="5.2" height="8.8" fill="url(#chg)"/><path d="M0.9 1.8h0.6M0.9 3.8h0.6M0.9 5.8h0.6M0.9 7.8h0.6M6.5 1.8h0.6M6.5 3.8h0.6M6.5 5.8h0.6M6.5 7.8h0.6" stroke="#999" stroke-width="0.7"/></svg></div>
<div class="lb g" style="top:488.55px;left:15.1px">Alienware 0KY0N5 (<span class=el>...</span></div>
<div class="icw" style="top:499.65px;left:4.5px"><svg class="ic" width="10" height="11" viewBox="0 0 10 11"><defs><linearGradient id="thg" x1="0" y1="0" x2="0" y2="1"><stop offset="0" stop-color="#b9c3ca"/><stop offset="0.55" stop-color="#c3c3c3"/><stop offset="0.7" stop-color="#d8b4a0"/><stop offset="1" stop-color="#c9a692"/></linearGradient></defs><rect x="1.5" y="0.2" width="4.4" height="9.4" rx="2.2" fill="url(#thg)" stroke="#9aa0a4" stroke-width="0.5"/><path d="M2.9 1.2v2.5" stroke="#e8f6ff" stroke-width="0.7"/><circle cx="3.7" cy="7.3" r="0.75" fill="#a03a2a"/></svg></div>
<div class="lb" style="top:500.05px;left:15.1px">PCH Temperature</div>
<div class="v" style="top:500.05px;right:192.20px">52.5 °C</div>
<div class="v" style="top:500.05px;right:138.10px">52.0 °C</div>
<div class="v" style="top:500.05px;right:84.10px">54.0 °C</div>
<div class="v" style="top:500.05px;right:30.10px">52.7 °C</div>
<div class="icw" style="top:522.65px;left:4.5px"><svg class="ic" width="10" height="11" viewBox="0 0 10 11"><defs><linearGradient id="chg" x1="0" y1="0" x2="1" y2="0"><stop offset="0" stop-color="#3a3a3a"/><stop offset="0.45" stop-color="#6e6e6e"/><stop offset="1" stop-color="#383838"/></linearGradient></defs><rect x="1.4" y="0.5" width="5.2" height="8.8" fill="url(#chg)"/><path d="M0.9 1.8h0.6M0.9 3.8h0.6M0.9 5.8h0.6M0.9 7.8h0.6M6.5 1.8h0.6M6.5 3.8h0.6M6.5 5.8h0.6M6.5 7.8h0.6" stroke="#999" stroke-width="0.7"/></svg></div>
<div class="lb g" style="top:523.05px;left:15.1px">S.M.A.R.T.: HGST <span class=el>...</span></div>
<div class="icw" style="top:534.15px;left:4.5px"><svg class="ic" width="10" height="11" viewBox="0 0 10 11"><defs><linearGradient id="thg" x1="0" y1="0" x2="0" y2="1"><stop offset="0" stop-color="#b9c3ca"/><stop offset="0.55" stop-color="#c3c3c3"/><stop offset="0.7" stop-color="#d8b4a0"/><stop offset="1" stop-color="#c9a692"/></linearGradient></defs><rect x="1.5" y="0.2" width="4.4" height="9.4" rx="2.2" fill="url(#thg)" stroke="#9aa0a4" stroke-width="0.5"/><path d="M2.9 1.2v2.5" stroke="#e8f6ff" stroke-width="0.7"/><circle cx="3.7" cy="7.3" r="0.75" fill="#a03a2a"/></svg></div>
<div class="lb" style="top:534.55px;left:15.1px">Drive Temperature</div>
<div class="v" style="top:534.55px;right:192.20px">34 °C</div>
<div class="v" style="top:534.55px;right:138.10px">34 °C</div>
<div class="v" style="top:534.55px;right:84.10px">34 °C</div>
<div class="v" style="top:534.55px;right:30.10px">34 °C</div>
<div class="icw" style="top:545.65px;left:4.5px"><svg class="ic" width="10" height="11" viewBox="0 0 10 11"><circle cx="4.2" cy="5.0" r="3.5" fill="#f4f4f4" stroke="#5a5a5a" stroke-width="1.1"/><path d="M2.9 4.7 Q4.3 4.2 5.7 5.3" fill="none" stroke="#9a9a9a" stroke-width="0.8"/></svg></div>
<div class="lb" style="top:546.05px;left:15.1px">Drive Failure</div>
<div class="v" style="top:546.05px;right:192.20px">No</div>
<div class="v" style="top:546.05px;right:138.10px">No</div>
<div class="v" style="top:546.05px;right:84.10px">No</div>
<div class="icw" style="top:557.15px;left:4.5px"><svg class="ic" width="10" height="11" viewBox="0 0 10 11"><circle cx="4.2" cy="5.0" r="3.5" fill="#f4f4f4" stroke="#5a5a5a" stroke-width="1.1"/><path d="M2.9 4.7 Q4.3 4.2 5.7 5.3" fill="none" stroke="#9a9a9a" stroke-width="0.8"/></svg></div>
<div class="lb" style="top:557.55px;left:15.1px">Drive Warning</div>
<div class="v" style="top:557.55px;right:192.20px">No</div>
<div class="v" style="top:557.55px;right:138.10px">No</div>
<div class="v" style="top:557.55px;right:84.10px">No</div>
<div class="icw" style="top:580.15px;left:4.5px"><svg class="ic" width="10" height="11" viewBox="0 0 10 11"><defs><linearGradient id="chg" x1="0" y1="0" x2="1" y2="0"><stop offset="0" stop-color="#3a3a3a"/><stop offset="0.45" stop-color="#6e6e6e"/><stop offset="1" stop-color="#383838"/></linearGradient></defs><rect x="1.4" y="0.5" width="5.2" height="8.8" fill="url(#chg)"/><path d="M0.9 1.8h0.6M0.9 3.8h0.6M0.9 5.8h0.6M0.9 7.8h0.6M6.5 1.8h0.6M6.5 3.8h0.6M6.5 5.8h0.6M6.5 7.8h0.6" stroke="#999" stroke-width="0.7"/></svg></div>
<div class="lb g" style="top:580.55px;left:15.1px">S.M.A.R.T.: Crucial<span class=el>...</span></div>
<div class="icw" style="top:591.65px;left:4.5px"><svg class="ic" width="10" height="11" viewBox="0 0 10 11"><defs><linearGradient id="thg" x1="0" y1="0" x2="0" y2="1"><stop offset="0" stop-color="#b9c3ca"/><stop offset="0.55" stop-color="#c3c3c3"/><stop offset="0.7" stop-color="#d8b4a0"/><stop offset="1" stop-color="#c9a692"/></linearGradient></defs><rect x="1.5" y="0.2" width="4.4" height="9.4" rx="2.2" fill="url(#thg)" stroke="#9aa0a4" stroke-width="0.5"/><path d="M2.9 1.2v2.5" stroke="#e8f6ff" stroke-width="0.7"/><circle cx="3.7" cy="7.3" r="0.75" fill="#a03a2a"/></svg></div>
<div class="lb" style="top:592.05px;left:15.1px">Drive Temperature</div>
<div class="v" style="top:592.05px;right:192.20px">51 °C</div>
<div class="v" style="top:592.05px;right:138.10px">50 °C</div>
<div class="v" style="top:592.05px;right:84.10px">52 °C</div>
<div class="v" style="top:592.05px;right:30.10px">51 °C</div>
<div class="icw" style="top:603.15px;left:4.5px"><svg class="ic" width="10" height="11" viewBox="0 0 10 11"><circle cx="4.2" cy="5.0" r="3.5" fill="#f4f4f4" stroke="#5a5a5a" stroke-width="1.1"/><path d="M2.9 4.7 Q4.3 4.2 5.7 5.3" fill="none" stroke="#9a9a9a" stroke-width="0.8"/></svg></div>
<div class="lb" style="top:603.55px;left:15.1px">Drive Remaining Life</div>
<div class="v" style="top:603.55px;right:192.20px">97.0 %</div>
<div class="v" style="top:603.55px;right:138.10px">97.0 %</div>
<div class="v" style="top:603.55px;right:84.10px">97.0 %</div>
<div class="v" style="top:603.55px;right:30.10px">97.0 %</div>
<div class="sb"><div class="sbup"><svg width="11" height="11" viewBox="0 0 11 11"><path d="M2.5 7 L5.5 4 L8.5 7" fill="none" stroke="#606060" stroke-width="1.2"/></svg></div><div class="thumb"></div><div class="sbdn"><svg width="11" height="11" viewBox="0 0 11 11"><path d="M2.5 4 L5.5 7 L8.5 4" fill="none" stroke="#606060" stroke-width="1.2"/></svg></div></div>
</div>
<div class="div" style="left:333px"></div>
<div class="div" style="left:665px"></div>
<div class="div" style="left:997px;background:#8a8a8a"></div>
<div class="btn" style="left:1px;width:29px"><svg style="position:absolute;left:3.2px;top:6.8px;overflow:visible" width="22" height="10" viewBox="0 0 22 10"><path d="M0 4.5 L4.4 0 L4.4 2.6 L9 2.6 L9 6.4 L4.4 6.4 L4.4 9 Z" fill="#3b8fdf"/><path d="M0 4.5 L4.4 0 L4.4 2.6 L9 2.6 L9 6.4 L4.4 6.4 L4.4 9 Z" fill="#3b8fdf" transform="translate(21 0) scale(-1 1)"/></svg></div>
<div class="btn" style="left:31px;width:29px"><svg style="position:absolute;left:2.8px;top:6.8px;overflow:visible" width="22" height="10" viewBox="0 0 22 10"><path d="M0 4.5 L4.4 0 L4.4 2.6 L9 2.6 L9 6.4 L4.4 6.4 L4.4 9 Z" fill="#3b8fdf" transform="translate(10.5 0) scale(-1 1)"/><path d="M0 4.5 L4.4 0 L4.4 2.6 L9 2.6 L9 6.4 L4.4 6.4 L4.4 9 Z" fill="#3b8fdf" transform="translate(10.8 0)"/></svg></div>
<svg style="position:absolute;left:738.8px;top:640.9px" width="13.3" height="13.3" viewBox="0 0 13.3 13.3"><rect x="0" y="0" width="13.3" height="13.3" rx="0.8" fill="#2a2a2a"/><path d="M8.63 7.44L12.33 8.97M7.44 8.63L8.97 12.33M5.76 8.63L4.23 12.33M4.57 7.44L0.87 8.97M4.57 5.76L0.87 4.23M5.76 4.57L4.23 0.87M7.44 4.57L8.97 0.87M8.63 5.76L12.33 4.23" stroke="#d8d8d8" stroke-width="1.2" stroke-linecap="round"/><circle cx="6.6" cy="6.6" r="1.9" fill="#e9dde2" stroke="#444" stroke-width="0.5"/></svg>
<div class="btn" style="left:800px;width:29px"><svg style="position:absolute;left:2px;top:1px;overflow:visible" width="24" height="21" viewBox="0 0 24 21"><defs><linearGradient id="nwg" x1="0" y1="0" x2="1" y2="1"><stop offset="0" stop-color="#7cc4ff"/><stop offset="0.5" stop-color="#1e7ee0"/><stop offset="1" stop-color="#0d5fb8"/></linearGradient></defs><path d="M11 5.5h6.5v6" stroke="#8a8a8a" fill="none" stroke-width="0.9"/><path d="M2.5 1.8 L11.8 3.2 L11 9.6 L1.7 8.2 Z" fill="url(#nwg)" stroke="#2a5e9a" stroke-width="0.5"/><path d="M3.5 11.5 Q7 13 10 11" stroke="#8c8c8c" stroke-width="1.2" fill="none"/><path d="M12.5 9.8 L21.8 11.2 L21 17.6 L11.7 16.2 Z" fill="url(#nwg)" stroke="#2a5e9a" stroke-width="0.5"/><path d="M13.5 19.5 Q17 21 20 19" stroke="#8c8c8c" stroke-width="1.2" fill="none"/></svg></div>
<div style="position:absolute;left:840.6px;top:642.2px;font-size:8.6px;line-height:10px;color:#1a1a1a;white-space:nowrap;transform:scaleX(0.9);transform-origin:0 50%;-webkit-text-stroke:0.15px #1a1a1a;letter-spacing:0.25px">0:10:17</div>
<div class="btn" style="left:871px;width:28px"><svg style="position:absolute;left:2.5px;top:0.5px;overflow:visible" width="22" height="22" viewBox="0 0 22 22"><circle cx="10.5" cy="10.7" r="10.3" fill="#fff" stroke="#3a3a3a" stroke-width="0.9"/><path d="M10.50 3.10L10.50 0.70M14.65 3.51L15.50 2.04M17.69 6.55L19.16 5.70M18.10 10.70L20.50 10.70M17.69 14.85L19.16 15.70M14.65 17.89L15.50 19.36M10.50 18.30L10.50 20.70M6.35 17.89L5.50 19.36M3.31 14.85L1.84 15.70M2.90 10.70L0.50 10.70M3.31 6.55L1.84 5.70M6.35 3.51L5.50 2.04" stroke="#333" stroke-width="0.9"/><path d="M10.5 10.7V3.2M10.5 10.7h5" stroke="#000" stroke-width="1.6"/></svg></div>
<div class="btn" style="left:901px;width:29px"><svg style="position:absolute;left:5px;top:1px;overflow:visible" width="20" height="21" viewBox="0 0 20 21"><path d="M2.5 1.2h8.5l3.6 3.6v14H2.5z" fill="#fbfbfb" stroke="#c4c4c4" stroke-width="0.8"/><path d="M11 1.2v3.6h3.6" fill="#e8e8e8" stroke="#c4c4c4" stroke-width="0.6"/><path d="M5.5 3v14M8.5 3v14" stroke="#d6d6d6" stroke-width="1.1"/><path d="M14.2 11.5v8M10.2 15.5h8" stroke="#6ea83c" stroke-width="3.6"/><path d="M14.2 12.2v6.6M10.9 15.5h6.6" stroke="#a6dc6c" stroke-width="2.2"/></svg></div>
<div class="btn" style="left:932px;width:29px"><svg style="position:absolute;left:3.5px;top:1px" width="21" height="21" viewBox="0 0 21 21"><defs><radialGradient id="gg" cx="0.4" cy="0.35" r="0.7"><stop offset="0" stop-color="#f2f2f2"/><stop offset="0.6" stop-color="#bdbdbd"/><stop offset="1" stop-color="#8d8d8d"/></radialGradient></defs><g transform="translate(10.5 10.5)"><path d="M-1.8 -9.6 L1.8 -9.6 L2.4 -7 L4.6 -6.1 L6.9 -7.5 L9.4 -5 L8 -2.7 L8.9 -0.5 L9.6 0 L9.6 1.8 L7 2.4 L6.1 4.6 L7.5 6.9 L5 9.4 L2.7 8 L1.8 8.4 L1.8 9.6 L-1.8 9.6 L-2.4 7 L-4.6 6.1 L-6.9 7.5 L-9.4 5 L-8 2.7 L-8.9 0.5 L-9.6 -1.8 L-7 -2.4 L-6.1 -4.6 L-7.5 -6.9 L-5 -9.4 L-2.7 -8 Z" fill="url(#gg)" stroke="#9a9a9a" stroke-width="0.5"/><circle r="4.3" fill="#e1e1e1" stroke="#8a8a8a" stroke-width="1.2"/><circle r="2.6" fill="#e8e8e8" stroke="#b0b0b0" stroke-width="0.6"/></g></svg></div>
<div class="btn" style="left:964px;width:29px;border:2px solid #2f7fcf;background:#e5e5e5"><svg style="position:absolute;left:4px;top:2.5px;overflow:visible" width="17" height="17" viewBox="0 0 17 17"><defs><linearGradient id="xg" x1="0" y1="0" x2="0" y2="1"><stop offset="0" stop-color="#5db0ea"/><stop offset="1" stop-color="#2a7cc4"/></linearGradient></defs><path d="M0.6 3.6 L3.6 0.6 L8.3 5.3 L13 0.6 L16 3.6 L11.3 8.3 L16 13 L13 16 L8.3 11.3 L3.6 16 L0.6 13 L5.3 8.3 Z" fill="url(#xg)"/></svg></div>
<div class="bd" style="left:1px;top:632px;width:1px;height:35px;background:#e6f7fd"></div>
<div class="bd" style="left:1px;top:666px;width:998px;height:1px;background:#e6f7fd"></div>
<div class="bd" style="left:0;top:0;width:1000px;height:1px;background:#6a9cc2"></div>
<div class="bd" style="left:0;top:667px;width:1000px;height:1px;background:#5f86a3"></div>
<div class="bd" style="left:0;top:0;width:1px;height:668px"></div>
<div class="bd" style="left:999px;top:0;width:1px;height:668px;background:#5f93bb"></div>
<div class="bd" style="left:998px;top:22px;width:1px;height:645px;background:#d6eef9"></div>
</body></html>
